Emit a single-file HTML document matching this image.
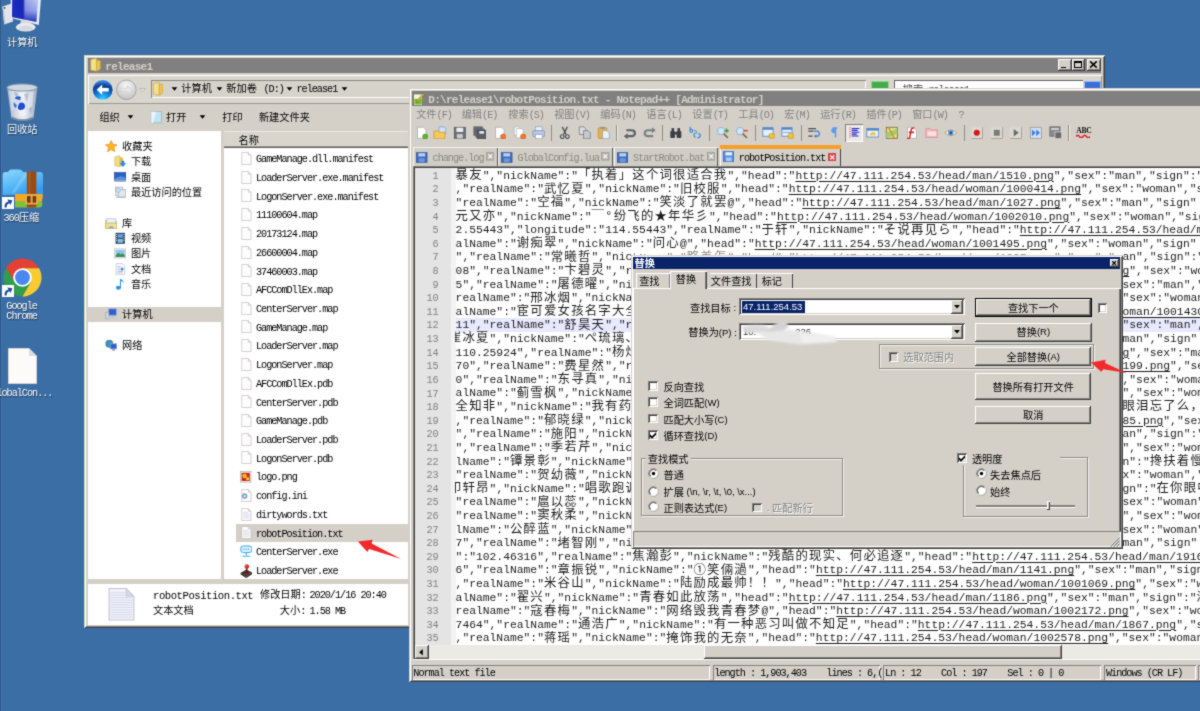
<!DOCTYPE html>
<html lang="zh-CN"><head><meta charset="utf-8"><title>Notepad++ replace</title><style>
html,body{margin:0;padding:0}
html{overflow:hidden;width:1200px;height:711px;background:#3a6ea5}
body{width:1200px;height:711px;overflow:hidden;background:#3a6ea5;position:relative;font-family:"Liberation Mono","Noto Sans CJK SC",monospace;font-size:10.2px;color:#000}
#v{position:absolute;left:0;top:0;width:1200px;height:711px;overflow:hidden}
#r{position:absolute;left:0;top:0;width:1260px;height:740px;background:#3a6ea5;filter:url(#soft)}
.a{position:absolute}
.t{white-space:pre}
.u{font-family:"Liberation Mono","Noto Sans CJK SC",monospace;font-size:10.2px}
.u .l,.dl .l,.tb .l,.u14 .l{letter-spacing:-1.02px}
.dl{font-family:"Liberation Mono","Noto Sans CJK SC",monospace;font-size:10.2px;color:#fff;text-shadow:.6px .6px .8px rgba(0,0,0,.55)}
.tb{font-family:"Liberation Mono","Noto Sans CJK SC",monospace;font-size:10.2px;font-weight:bold}
.tb .l{letter-spacing:-.72px;font-size:11px}
.u14{font-family:"Liberation Mono","Noto Sans CJK SC",monospace;font-size:10.6px}
.u14 .l{letter-spacing:-.46px}
.d{font-family:"Liberation Sans","Noto Sans CJK SC",sans-serif;font-size:10.2px}
.dn{position:relative;top:-.9px;font-size:9.5px}
.e{font-family:"Liberation Mono","Noto Sans CJK SC",monospace;font-size:11.33px;white-space:pre;color:#1c1c1c}
.e .c{font-size:12.4px;letter-spacing:1.2px;line-height:0;position:relative;top:.4px}
.e u{text-decoration:underline;text-decoration-thickness:.9px;text-underline-offset:1.5px}
.ln{font-family:"Liberation Mono",monospace;font-size:10.2px;color:#808080;text-align:right}
</style></head><body><svg width="0" height="0" style="position:absolute"><defs><filter id="soft" x="0" y="0" width="100%" height="100%" color-interpolation-filters="sRGB"><feConvolveMatrix order="3" kernelMatrix="0.03 0.09 0.03 0.09 0.52 0.09 0.03 0.09 0.03" edgeMode="duplicate" preserveAlpha="true"/></filter></defs></svg><div id="v"><div id="r">
<svg class="a" style="left:0;top:0" width="44" height="34" viewBox="0 0 44 34">
<defs><linearGradient id="scr" x1="0" y1="0" x2="1" y2="0"><stop offset="0" stop-color="#1a2ec0"/><stop offset=".42" stop-color="#1424b0"/><stop offset=".5" stop-color="#9aa8ea"/><stop offset="1" stop-color="#c9d2f4"/></linearGradient>
<linearGradient id="scr2" x1="0" y1="0" x2="0" y2="1"><stop offset="0" stop-color="#2030c0" stop-opacity="0"/><stop offset=".55" stop-color="#2030c0" stop-opacity=".25"/><stop offset="1" stop-color="#1a2ab8" stop-opacity=".95"/></linearGradient></defs>
<path d="M2.5 6.5 L11.5 3.6 L13 21.4 L4.2 24.6Z" fill="#e3e4ea"/>
<path d="M2.5 6.5 L4.2 24.6 L5.4 24.2 L3.8 6.1Z" fill="#c9cbd4"/>
<circle cx="4.6" cy="7.8" r=".9" fill="#3a4a3a"/>
<path d="M10.6 -3 L41 -2 L38.8 25 L11.2 18Z" fill="#eceef3"/>
<path d="M12.2 -3 L38.4 -2 L36.4 22 L12 16.9Z" fill="url(#scr)"/>
<path d="M12.2 -3 L38.4 -2 L36.4 22 L12 16.9Z" fill="url(#scr2)"/>
<path d="M21 20 L31 22.5 L31.4 26 L20 25Z" fill="#d4d6dc"/>
<ellipse cx="25.7" cy="27.2" rx="9.8" ry="4.4" fill="#e9eaee"/>
<ellipse cx="25.7" cy="28.2" rx="7" ry="2.4" fill="#d6d8de"/>
</svg>
<div class="a t dl" style="left:7.00px;top:37.00px;height:14px;line-height:14px;">计算机</div>
<svg class="a" style="left:5px;top:82px" width="36" height="41" viewBox="0 0 36 41">
<defs><linearGradient id="bin" x1="0" y1="0" x2="1" y2="0"><stop offset="0" stop-color="#a3b2c8"/><stop offset=".3" stop-color="#d3dbe7"/><stop offset=".55" stop-color="#e9edf4"/><stop offset=".8" stop-color="#c2cddd"/><stop offset="1" stop-color="#93a3ba"/></linearGradient></defs>
<path d="M2 5 L32.5 5 L28.5 36.5 Q17.5 41 6.5 36.5Z" fill="url(#bin)"/>
<path d="M4 9 L9 8 L11 20 L7 30Z M14 8 L20 10 L18 18 L13 15Z M22 12 L29 9 L27 24 L23 27Z M12 26 L20 24 L22 33 L14 35Z" fill="#fff" opacity=".35"/>
<path d="M9 10 L13 12 L12 18Z M19 12 L24 11 L22 20Z M24 26 L27 25 L26 33Z" fill="#7f8da3" opacity=".4"/>
<ellipse cx="17.2" cy="5.5" rx="15.2" ry="3.6" fill="#cfd7e2" stroke="#8693a5" stroke-width="1"/>
<path d="M6.5 34.5 Q17.5 40 28.5 34.5 L28.3 36.5 Q17.5 41.5 6.7 36.5Z" fill="#6f747d" opacity=".8"/>
<path d="M9.5 16.5 q2.5 -3.5 6.5 -1.5 l-1 3.2 q-3 -1 -5.5 -1.7z" fill="#2a5bd0"/>
<path d="M14.5 21 q4.5 -1.5 5.5 2.5 q.5 4 -4 4.5 q-3 0 -3.2 -2.6 q.2 -2 1.7 -4.4z" fill="#1f4fd0"/>
<path d="M9 20 q-1.5 3.5 1.5 6 l1.5 -2.5 q-1.5 -1.5 -3 -3.5z" fill="#3d6fe0"/>
</svg>
<div class="a t dl" style="left:7.00px;top:124.00px;height:14px;line-height:14px;">回收站</div>
<svg class="a" style="left:1.5px;top:169px" width="42" height="41" viewBox="0 0 42 41">
<defs><linearGradient id="fz" x1="0" y1="0" x2=".6" y2="1"><stop offset="0" stop-color="#8fd8ff"/><stop offset=".5" stop-color="#5ebcf8"/><stop offset="1" stop-color="#2f9cf0"/></linearGradient></defs>
<path d="M.6 6 Q.6 3 3.6 3 L6 3 Q7.5 .4 10 .6 L17 .6 Q19.5 .4 21 3 L38 3 Q41 3 41 6 L41 26 L.6 26Z" fill="url(#fz)"/>
<path d="M9 24 L22 5 L26 5 L13 24Z" fill="#fff" opacity=".18"/>
<path d="M13 25 L40 25 L41 26.5 L40 32 L13 32Z" fill="#f5a623"/>
<path d="M13 32 L40 32 L40.4 36 Q40 38.4 38 38.6 L13 38.6Z" fill="#7cc23f"/>
<rect x="24.8" y="2.4" width="9.6" height="36" rx="1.2" fill="#9a4a16"/>
<rect x="26.6" y="3" width="2" height="22" fill="#b5642a" opacity=".6"/>
<rect x="23" y="25" width="13.2" height="10.6" rx="2" fill="#e2ae44"/>
<rect x="25" y="27" width="9.2" height="6.8" rx="1" fill="#7a3812"/>
<rect x="28.6" y="26.4" width="2" height="8" fill="#e2ae44"/>
</svg>
<svg class="a" style="left:2.4px;top:197.2px" width="12.0" height="12.0" viewBox="0 0 12 12"><rect x="0" y="0" width="12" height="12" fill="#fff"/><path d="M2.6 10.6 Q2 5.4 6.4 4.6 L5.4 2.4 L10.4 3.2 L8.6 8 L7.6 6.2 Q4.6 6.6 4.6 10.6Z" fill="#1f4aa0"/></svg>
<div class="a t dl" style="left:3.50px;top:211.50px;height:14px;line-height:14px;"><span class="l">360</span>压缩</div>
<svg class="a" style="left:3px;top:257.5px" width="39" height="39" viewBox="0 0 40 40">
<path d="M20 10.4 L36.97 10.4 A19.5 19.5 0 0 0 3.2 10.1 L11.69 24.8 L20 20Z" fill="#e34133"/>
<path d="M28.31 24.8 L19.83 39.5 A19.5 19.5 0 0 0 36.97 10.4 L20 10.4 L20 20Z" fill="#f9cb31"/>
<path d="M11.69 24.8 L3.2 10.1 A19.5 19.5 0 0 0 19.83 39.5 L28.31 24.8 L20 20Z" fill="#2f9e4f"/>
<circle cx="20" cy="20" r="9.6" fill="#fff"/>
<circle cx="20" cy="20" r="7.6" fill="#4a87ee"/>
</svg>
<svg class="a" style="left:2.4px;top:284.6px" width="12.0" height="12.0" viewBox="0 0 12 12"><rect x="0" y="0" width="12" height="12" fill="#fff"/><path d="M2.6 10.6 Q2 5.4 6.4 4.6 L5.4 2.4 L10.4 3.2 L8.6 8 L7.6 6.2 Q4.6 6.6 4.6 10.6Z" fill="#1f4aa0"/></svg>
<div class="a t dl" style="left:6.30px;top:299.70px;height:14px;line-height:14px;"><span class="l">Google</span></div>
<div class="a t dl" style="left:6.30px;top:310.00px;height:14px;line-height:14px;"><span class="l">Chrome</span></div>
<svg class="a" style="left:8px;top:347.5px" width="29" height="36" viewBox="0 0 29 36"><path d="M.5 .5 L21 .5 L28.5 8 L28.5 35.5 L.5 35.5Z" fill="#fdfafa" stroke="#d9d4d4"/><path d="M21 .5 L21 8 L28.5 8Z" fill="#d9dce2"/></svg>
<div class="a t dl" style="left:-3.60px;top:387.00px;height:14px;line-height:14px;"><span class="l">lobalCon...</span></div>
<div class="a " style="left:84.30px;top:54.50px;width:1020.90px;height:573.90px;background:#d4d0c8;box-shadow:inset 1px 1px 0 #d4d0c8,inset -1px -1px 0 #404040,inset 2px 2px 0 #fff,inset -2px -2px 0 #808080"></div>
<div class="a " style="left:88.00px;top:57.60px;width:1013.40px;height:15.60px;background:#808080"></div>
<svg class="a" style="left:90.0px;top:58.4px" width="11.0" height="13.5" viewBox="0 0 11 14"><path d="M.5 1.5 L6.5 .3 L6.5 13.7 L.5 12.5Z" fill="#f7e08a" stroke="#c9a43a" stroke-width=".6"/><path d="M6.5 2 L10.5 2.8 L10.5 11.5 L6.5 13.7Z" fill="#e9c455" stroke="#c9a43a" stroke-width=".6"/></svg>
<div class="a t tb" style="left:105.30px;top:60.30px;height:14px;line-height:14px;color:#d4d0c8"><span class="l">release1</span></div>
<div class="a " style="left:1058.00px;top:59.40px;width:13.60px;height:11.60px;background:#d4d0c8;box-shadow:inset -1px -1px 0 #404040,inset 1px 1px 0 #fff,inset -2px -2px 0 #808080;"></div>
<div class="a " style="left:1060.80px;top:66.60px;width:5.20px;height:1.70px;background:#000"></div>
<div class="a " style="left:1071.60px;top:59.40px;width:13.60px;height:11.60px;background:#d4d0c8;box-shadow:inset -1px -1px 0 #404040,inset 1px 1px 0 #fff,inset -2px -2px 0 #808080;"></div>
<div class="a " style="left:1074.10px;top:61.40px;width:7.80px;height:6.60px;border:1px solid #000;border-top:2px solid #000;box-sizing:border-box"></div>
<div class="a " style="left:1087.20px;top:59.40px;width:13.60px;height:11.60px;background:#d4d0c8;box-shadow:inset -1px -1px 0 #404040,inset 1px 1px 0 #fff,inset -2px -2px 0 #808080;"></div>
<svg class="a" style="left:1087.2px;top:59.4px" width="13.6" height="11.6" viewBox="0 0 13 11"><path d="M3 2.2 L9.3 8.2 M9.3 2.2 L3 8.2" stroke="#000" stroke-width="1.5"/></svg>
<div class="a " style="left:87.60px;top:75.00px;width:1014.00px;height:29.00px;background:#d9d6ce;box-shadow:inset 1px 1px 0 #fff,inset -1px -1px 0 #9a978f"></div>
<svg class="a" style="left:90px;top:78px" width="60" height="24" viewBox="0 0 60 24">
<defs><radialGradient id="bk" cx=".5" cy=".95" r=".95"><stop offset="0" stop-color="#3fd0ff"/><stop offset=".35" stop-color="#1186e0"/><stop offset=".7" stop-color="#0b3f9a"/><stop offset="1" stop-color="#5fa8e8"/></radialGradient>
<radialGradient id="fw" cx=".5" cy=".3" r=".8"><stop offset="0" stop-color="#fafafa"/><stop offset="1" stop-color="#b9b9b9"/></radialGradient></defs>
<circle cx="12.7" cy="11.8" r="10.4" fill="url(#bk)" stroke="#e9eef5" stroke-width=".8"/>
<path d="M6.7 11.8 L12.2 6.6 L12.2 10 L18.7 10 L18.7 13.6 L12.2 13.6 L12.2 17Z" fill="#fff"/>
<circle cx="36.4" cy="11.8" r="9.8" fill="url(#fw)" stroke="#9a9a9a" stroke-width=".8"/>
<path d="M42 11.8 L37 7.2 L37 10.3 L31 10.3 L31 13.3 L37 13.3 L37 16.4Z" fill="#e8e8e8" stroke="#c4c4c4" stroke-width=".5"/>
<path d="M49.5 10.5 L55.5 10.5 L52.5 14Z" fill="#e6e6e6" stroke="#a0a0a0" stroke-width=".6"/>
</svg>
<div class="a " style="left:151.00px;top:80.00px;width:715.00px;height:17.80px;background:#d6d3cb;box-shadow:inset 1px 1px 0 #8a8780,inset -1px -1px 0 #fff"></div>
<svg class="a" style="left:152.8px;top:82.2px" width="10.5" height="13.5" viewBox="0 0 11 14"><path d="M.5 1.5 L6.5 .3 L6.5 13.7 L.5 12.5Z" fill="#f7e08a" stroke="#c9a43a" stroke-width=".6"/><path d="M6.5 2 L10.5 2.8 L10.5 11.5 L6.5 13.7Z" fill="#e9c455" stroke="#c9a43a" stroke-width=".6"/></svg>
<svg class="a" style="left:170.5px;top:87.1px" width="7" height="4.2" viewBox="0 0 6 4"><path d="M0.3 .3 L5.7 .3 L3 3.6Z" fill="#000"/></svg>
<div class="a t u" style="left:181.30px;top:83.10px;height:14px;line-height:14px;">计算机</div>
<svg class="a" style="left:215.5px;top:87.1px" width="7" height="4.2" viewBox="0 0 6 4"><path d="M0.3 .3 L5.7 .3 L3 3.6Z" fill="#000"/></svg>
<div class="a t u" style="left:226.30px;top:83.10px;height:14px;line-height:14px;">新加卷</div>
<div class="a t u" style="left:263.50px;top:83.10px;height:14px;line-height:14px;"><span class="l">(D:)</span></div>
<svg class="a" style="left:286.1px;top:87.1px" width="7" height="4.2" viewBox="0 0 6 4"><path d="M0.3 .3 L5.7 .3 L3 3.6Z" fill="#000"/></svg>
<div class="a t u" style="left:296.50px;top:83.10px;height:14px;line-height:14px;"><span class="l">release1</span></div>
<svg class="a" style="left:341.4px;top:87.1px" width="7" height="4.2" viewBox="0 0 6 4"><path d="M0.3 .3 L5.7 .3 L3 3.6Z" fill="#000"/></svg>
<div class="a " style="left:871.00px;top:81.00px;width:18.00px;height:17.00px;background:#3fae49;border-radius:2px;box-shadow:inset 0 0 0 1px #8fd695"></div>
<div class="a " style="left:894.00px;top:80.40px;width:188.50px;height:17.80px;background:#fff;box-shadow:inset 1px 1px 0 #606060"></div>
<div class="a t u" style="left:902.80px;top:84.30px;height:14px;line-height:14px;color:#4a4a4a">搜索<span class="l"> release1</span></div>
<div class="a " style="left:1084.00px;top:81.00px;width:16.50px;height:17.00px;background:#3b6fd8;border-radius:2px;box-shadow:inset 0 0 0 1px #9ab8ee"></div>
<div class="a " style="left:88.00px;top:105.00px;width:1013.40px;height:26.00px;background:#d4d0c8"></div>
<div class="a t u" style="left:99.40px;top:112.30px;height:14px;line-height:14px;">组织</div>
<svg class="a" style="left:127.3px;top:115.3px" width="7" height="4.2" viewBox="0 0 6 4"><path d="M0.3 .3 L5.7 .3 L3 3.6Z" fill="#000"/></svg>
<svg class="a" style="left:150px;top:111.4px" width="12.5" height="12.5" viewBox="0 0 12 12"><rect x="1.2" y=".6" width="9.8" height="10.8" fill="#bfe4f5" stroke="#9fb4c2" stroke-width=".8"/><path d="M1.2 .6 L6 .6 L3 11.4 L1.2 11.4Z" fill="#e9f6fc"/></svg>
<div class="a t u" style="left:166.00px;top:112.30px;height:14px;line-height:14px;">打开</div>
<svg class="a" style="left:198.9px;top:115.3px" width="7" height="4.2" viewBox="0 0 6 4"><path d="M0.3 .3 L5.7 .3 L3 3.6Z" fill="#000"/></svg>
<div class="a t u" style="left:222.30px;top:112.30px;height:14px;line-height:14px;">打印</div>
<div class="a t u" style="left:258.90px;top:112.30px;height:14px;line-height:14px;">新建文件夹</div>
<div class="a " style="left:87.70px;top:131.30px;width:133.70px;height:448.20px;background:#fff"></div>
<div class="a " style="left:87.70px;top:307.10px;width:133.70px;height:14.70px;background:#d4d0c8"></div>
<div class="a " style="left:224.30px;top:131.30px;width:184.00px;height:448.20px;background:#fff"></div>
<div class="a " style="left:224.30px;top:131.30px;width:184.00px;height:17.20px;background:#d8d5cd;box-shadow:inset 0 -1.4px 0 #5f5d58, inset 0 1px 0 #eceae4"></div>
<div class="a t u" style="left:238.60px;top:135.20px;height:14px;line-height:14px;">名称</div>
<div class="a " style="left:87.70px;top:584.20px;width:320.60px;height:40.80px;background:#fff"></div>
<svg class="a" style="left:105.0px;top:139.8px" width="12.4" height="12.4" viewBox="0 0 12 12"><path d="M6 .5 L7.6 4.2 L11.6 4.6 L8.6 7.3 L9.5 11.3 L6 9.2 L2.5 11.3 L3.4 7.3 L.4 4.6 L4.4 4.2Z" fill="#ffb624" stroke="#f08a1c" stroke-width=".7"/></svg>
<div class="a t u" style="left:122.10px;top:140.80px;height:14px;line-height:14px;">收藏夹</div>
<svg class="a" style="left:113.8px;top:155.2px" width="12.4" height="12.4" viewBox="0 0 12 12"><path d="M.8 2 L5.5 .6 L5.5 11.4 L.8 10.4Z" fill="#f6de85" stroke="#c9a43a" stroke-width=".5"/><path d="M5.5 2 L8.7 2.6 L8.7 9.8 L5.5 11.4Z" fill="#e5bf4d"/><path d="M7.2 5.6 L10 5.6 L10 8 L11.8 8 L8.6 11.6 L5.4 8 L7.2 8Z" fill="#2a8be6"/></svg>
<div class="a t u" style="left:130.90px;top:156.20px;height:14px;line-height:14px;">下载</div>
<svg class="a" style="left:113.8px;top:170.7px" width="12.4" height="12.4" viewBox="0 0 12 12"><rect x=".5" y="1.5" width="11" height="7.5" fill="#2a5fc4" stroke="#1b3f8c" stroke-width=".6"/><rect x=".5" y="9" width="11" height="1.6" fill="#9fb3cf"/><path d="M.8 7.5 Q6 3 11.2 6.5 L11.2 8.8 L.8 8.8Z" fill="#5a8fe6"/></svg>
<div class="a t u" style="left:130.90px;top:171.70px;height:14px;line-height:14px;">桌面</div>
<svg class="a" style="left:113.8px;top:186.1px" width="12.4" height="12.4" viewBox="0 0 12 12"><rect x="1.5" y="1" width="7" height="8" fill="#eef2f6" stroke="#9aa7b5" stroke-width=".6"/><rect x="4" y="3.4" width="7" height="7.4" fill="#dfe8f1" stroke="#9aa7b5" stroke-width=".6"/><circle cx="4" cy="4" r="2.2" fill="#cfe0f4" stroke="#7f97b5" stroke-width=".5"/><rect x="2" y="10.2" width="9" height="1.2" fill="#b3bcc7"/></svg>
<div class="a t u" style="left:130.90px;top:187.10px;height:14px;line-height:14px;">最近访问的位置</div>
<svg class="a" style="left:105.0px;top:216.5px" width="12.4" height="12.4" viewBox="0 0 12 12"><path d="M.6 3 L4 3 L5 4.2 L11.4 4.2 L11.4 11 L.6 11Z" fill="#f3d87a" stroke="#c9a43a" stroke-width=".5"/><path d="M1.6 1.6 L10.4 1.6 L10.4 6 L1.6 6Z" fill="#e8f1fb" stroke="#9db4d0" stroke-width=".5"/><path d="M.6 6 L11.4 6 L11.4 11 L.6 11Z" fill="#f7e08a" stroke="#c9a43a" stroke-width=".5"/><path d="M3 11 Q6 6.5 9 11Z" fill="#6fb5ee"/></svg>
<div class="a t u" style="left:122.10px;top:217.50px;height:14px;line-height:14px;">库</div>
<svg class="a" style="left:113.8px;top:231.8px" width="12.4" height="12.4" viewBox="0 0 12 12"><rect x="1.5" y=".8" width="9" height="10.6" fill="#2c3a4f"/><rect x="3.4" y="1.8" width="5.2" height="3.8" fill="#5ea3e6"/><rect x="3.4" y="6.6" width="5.2" height="3.8" fill="#7fc0f0"/><path d="M2 2h.9v1H2zM2 4h.9v1H2zM2 6h.9v1H2zM2 8h.9v1H2zM9.1 2h.9v1h-.9zM9.1 4h.9v1h-.9zM9.1 6h.9v1h-.9zM9.1 8h.9v1h-.9z" fill="#dfe6ee"/></svg>
<div class="a t u" style="left:130.90px;top:232.80px;height:14px;line-height:14px;">视频</div>
<svg class="a" style="left:113.8px;top:247.2px" width="12.4" height="12.4" viewBox="0 0 12 12"><rect x=".6" y="1.8" width="10.8" height="8.8" fill="#eef3f7" stroke="#a9b6c4" stroke-width=".6"/><rect x="1.6" y="2.8" width="8.8" height="6.8" fill="#8ec5ee"/><path d="M1.6 8 L4.5 5.5 L6.5 7.2 L8.2 6 L10.4 8 L10.4 9.6 L1.6 9.6Z" fill="#3f8f4d"/></svg>
<div class="a t u" style="left:130.90px;top:248.20px;height:14px;line-height:14px;">图片</div>
<svg class="a" style="left:113.8px;top:262.5px" width="12.4" height="12.4" viewBox="0 0 12 12"><path d="M2 .6 L8 .6 L10.4 3 L10.4 11.4 L2 11.4Z" fill="#fbfcfe" stroke="#a9b6c4" stroke-width=".6"/><path d="M3.4 3.4h3M3.4 5h2.4M3.4 6.6h2.4M3.4 8.2h5.2M3.4 9.6h5.2" stroke="#8da4c0" stroke-width=".6"/><rect x="6.6" y="4.6" width="2.4" height="2.6" fill="#3f7fd6"/></svg>
<div class="a t u" style="left:130.90px;top:263.50px;height:14px;line-height:14px;">文档</div>
<svg class="a" style="left:113.8px;top:277.8px" width="12.4" height="12.4" viewBox="0 0 12 12"><path d="M5.8 .8 Q9.6 2 9.6 5.4 Q9.4 3.4 6.8 3 L6.8 9 Q6.8 11.4 4.2 11.4 Q1.8 11.4 1.8 9.4 Q1.8 7.6 4.2 7.6 Q5.2 7.6 5.8 8Z" fill="#2d93ea"/></svg>
<div class="a t u" style="left:130.90px;top:278.80px;height:14px;line-height:14px;">音乐</div>
<svg class="a" style="left:105.0px;top:308.3px" width="12.4" height="12.4" viewBox="0 0 12 12"><rect x="3.4" y=".8" width="7.6" height="6.2" fill="#2f5fd0" stroke="#9fb0cc" stroke-width=".7"/><rect x="5.2" y="7.2" width="4" height="1.2" fill="#a9b3c2"/><rect x=".8" y="4" width="3" height="6.6" fill="#cfd6df" stroke="#8d98a8" stroke-width=".5"/><rect x="3" y="9.2" width="8.4" height="1.6" fill="#c6ccd6"/></svg>
<div class="a t u" style="left:122.10px;top:309.30px;height:14px;line-height:14px;">计算机</div>
<svg class="a" style="left:105.0px;top:339.1px" width="12.4" height="12.4" viewBox="0 0 12 12"><circle cx="4.2" cy="4.6" r="3.8" fill="#3fa55a"/><path d="M1 3 Q4 1 6.5 2.2 Q5 4.4 6.8 6 Q4 8.6 1.4 7Z" fill="#3d86e0"/><rect x="5" y="4.6" width="6.4" height="5" fill="#2f5fd0" stroke="#9fb0cc" stroke-width=".7"/><rect x="6.8" y="9.8" width="3" height="1.4" fill="#8d98a8"/></svg>
<div class="a t u" style="left:122.10px;top:340.10px;height:14px;line-height:14px;">网络</div>
<svg class="a" style="left:240.8px;top:151.9px" width="10.8" height="13.0" viewBox="0 0 11 14"><path d="M.5 .5 L7.6 .5 L10.5 3.4 L10.5 13.5 L.5 13.5Z" fill="#fffdfd" stroke="#b9b4b4" stroke-width=".7"/><path d="M7.6 .5 L7.6 3.4 L10.5 3.4" fill="#eee" stroke="#b9b4b4" stroke-width=".6"/></svg>
<div class="a t u" style="left:256.00px;top:153.30px;height:14px;line-height:14px;"><span class="l">GameManage.dll.manifest</span></div>
<svg class="a" style="left:240.8px;top:170.6px" width="10.8" height="13.0" viewBox="0 0 11 14"><path d="M.5 .5 L7.6 .5 L10.5 3.4 L10.5 13.5 L.5 13.5Z" fill="#fffdfd" stroke="#b9b4b4" stroke-width=".7"/><path d="M7.6 .5 L7.6 3.4 L10.5 3.4" fill="#eee" stroke="#b9b4b4" stroke-width=".6"/></svg>
<div class="a t u" style="left:256.00px;top:172.02px;height:14px;line-height:14px;"><span class="l">LoaderServer.exe.manifest</span></div>
<svg class="a" style="left:240.8px;top:189.3px" width="10.8" height="13.0" viewBox="0 0 11 14"><path d="M.5 .5 L7.6 .5 L10.5 3.4 L10.5 13.5 L.5 13.5Z" fill="#fffdfd" stroke="#b9b4b4" stroke-width=".7"/><path d="M7.6 .5 L7.6 3.4 L10.5 3.4" fill="#eee" stroke="#b9b4b4" stroke-width=".6"/></svg>
<div class="a t u" style="left:256.00px;top:190.73px;height:14px;line-height:14px;"><span class="l">LogonServer.exe.manifest</span></div>
<svg class="a" style="left:240.8px;top:208.0px" width="10.8" height="13.0" viewBox="0 0 11 14"><path d="M.5 .5 L7.6 .5 L10.5 3.4 L10.5 13.5 L.5 13.5Z" fill="#fffdfd" stroke="#b9b4b4" stroke-width=".7"/><path d="M7.6 .5 L7.6 3.4 L10.5 3.4" fill="#eee" stroke="#b9b4b4" stroke-width=".6"/></svg>
<div class="a t u" style="left:256.00px;top:209.45px;height:14px;line-height:14px;"><span class="l">11100604.map</span></div>
<svg class="a" style="left:240.8px;top:226.8px" width="10.8" height="13.0" viewBox="0 0 11 14"><path d="M.5 .5 L7.6 .5 L10.5 3.4 L10.5 13.5 L.5 13.5Z" fill="#fffdfd" stroke="#b9b4b4" stroke-width=".7"/><path d="M7.6 .5 L7.6 3.4 L10.5 3.4" fill="#eee" stroke="#b9b4b4" stroke-width=".6"/></svg>
<div class="a t u" style="left:256.00px;top:228.16px;height:14px;line-height:14px;"><span class="l">20173124.map</span></div>
<svg class="a" style="left:240.8px;top:245.5px" width="10.8" height="13.0" viewBox="0 0 11 14"><path d="M.5 .5 L7.6 .5 L10.5 3.4 L10.5 13.5 L.5 13.5Z" fill="#fffdfd" stroke="#b9b4b4" stroke-width=".7"/><path d="M7.6 .5 L7.6 3.4 L10.5 3.4" fill="#eee" stroke="#b9b4b4" stroke-width=".6"/></svg>
<div class="a t u" style="left:256.00px;top:246.88px;height:14px;line-height:14px;"><span class="l">26600004.map</span></div>
<svg class="a" style="left:240.8px;top:264.2px" width="10.8" height="13.0" viewBox="0 0 11 14"><path d="M.5 .5 L7.6 .5 L10.5 3.4 L10.5 13.5 L.5 13.5Z" fill="#fffdfd" stroke="#b9b4b4" stroke-width=".7"/><path d="M7.6 .5 L7.6 3.4 L10.5 3.4" fill="#eee" stroke="#b9b4b4" stroke-width=".6"/></svg>
<div class="a t u" style="left:256.00px;top:265.60px;height:14px;line-height:14px;"><span class="l">37460003.map</span></div>
<svg class="a" style="left:240.8px;top:282.9px" width="10.8" height="13.0" viewBox="0 0 11 14"><path d="M.5 .5 L7.6 .5 L10.5 3.4 L10.5 13.5 L.5 13.5Z" fill="#fffdfd" stroke="#b9b4b4" stroke-width=".7"/><path d="M7.6 .5 L7.6 3.4 L10.5 3.4" fill="#eee" stroke="#b9b4b4" stroke-width=".6"/></svg>
<div class="a t u" style="left:256.00px;top:284.31px;height:14px;line-height:14px;"><span class="l">AFCComDllEx.map</span></div>
<svg class="a" style="left:240.8px;top:301.6px" width="10.8" height="13.0" viewBox="0 0 11 14"><path d="M.5 .5 L7.6 .5 L10.5 3.4 L10.5 13.5 L.5 13.5Z" fill="#fffdfd" stroke="#b9b4b4" stroke-width=".7"/><path d="M7.6 .5 L7.6 3.4 L10.5 3.4" fill="#eee" stroke="#b9b4b4" stroke-width=".6"/></svg>
<div class="a t u" style="left:256.00px;top:303.03px;height:14px;line-height:14px;"><span class="l">CenterServer.map</span></div>
<svg class="a" style="left:240.8px;top:320.3px" width="10.8" height="13.0" viewBox="0 0 11 14"><path d="M.5 .5 L7.6 .5 L10.5 3.4 L10.5 13.5 L.5 13.5Z" fill="#fffdfd" stroke="#b9b4b4" stroke-width=".7"/><path d="M7.6 .5 L7.6 3.4 L10.5 3.4" fill="#eee" stroke="#b9b4b4" stroke-width=".6"/></svg>
<div class="a t u" style="left:256.00px;top:321.74px;height:14px;line-height:14px;"><span class="l">GameManage.map</span></div>
<svg class="a" style="left:240.8px;top:339.1px" width="10.8" height="13.0" viewBox="0 0 11 14"><path d="M.5 .5 L7.6 .5 L10.5 3.4 L10.5 13.5 L.5 13.5Z" fill="#fffdfd" stroke="#b9b4b4" stroke-width=".7"/><path d="M7.6 .5 L7.6 3.4 L10.5 3.4" fill="#eee" stroke="#b9b4b4" stroke-width=".6"/></svg>
<div class="a t u" style="left:256.00px;top:340.46px;height:14px;line-height:14px;"><span class="l">LoaderServer.map</span></div>
<svg class="a" style="left:240.8px;top:357.8px" width="10.8" height="13.0" viewBox="0 0 11 14"><path d="M.5 .5 L7.6 .5 L10.5 3.4 L10.5 13.5 L.5 13.5Z" fill="#fffdfd" stroke="#b9b4b4" stroke-width=".7"/><path d="M7.6 .5 L7.6 3.4 L10.5 3.4" fill="#eee" stroke="#b9b4b4" stroke-width=".6"/></svg>
<div class="a t u" style="left:256.00px;top:359.18px;height:14px;line-height:14px;"><span class="l">LogonServer.map</span></div>
<svg class="a" style="left:240.8px;top:376.5px" width="10.8" height="13.0" viewBox="0 0 11 14"><path d="M.5 .5 L7.6 .5 L10.5 3.4 L10.5 13.5 L.5 13.5Z" fill="#fffdfd" stroke="#b9b4b4" stroke-width=".7"/><path d="M7.6 .5 L7.6 3.4 L10.5 3.4" fill="#eee" stroke="#b9b4b4" stroke-width=".6"/></svg>
<div class="a t u" style="left:256.00px;top:377.89px;height:14px;line-height:14px;"><span class="l">AFCComDllEx.pdb</span></div>
<svg class="a" style="left:240.8px;top:395.2px" width="10.8" height="13.0" viewBox="0 0 11 14"><path d="M.5 .5 L7.6 .5 L10.5 3.4 L10.5 13.5 L.5 13.5Z" fill="#fffdfd" stroke="#b9b4b4" stroke-width=".7"/><path d="M7.6 .5 L7.6 3.4 L10.5 3.4" fill="#eee" stroke="#b9b4b4" stroke-width=".6"/></svg>
<div class="a t u" style="left:256.00px;top:396.61px;height:14px;line-height:14px;"><span class="l">CenterServer.pdb</span></div>
<svg class="a" style="left:240.8px;top:413.9px" width="10.8" height="13.0" viewBox="0 0 11 14"><path d="M.5 .5 L7.6 .5 L10.5 3.4 L10.5 13.5 L.5 13.5Z" fill="#fffdfd" stroke="#b9b4b4" stroke-width=".7"/><path d="M7.6 .5 L7.6 3.4 L10.5 3.4" fill="#eee" stroke="#b9b4b4" stroke-width=".6"/></svg>
<div class="a t u" style="left:256.00px;top:415.32px;height:14px;line-height:14px;"><span class="l">GameManage.pdb</span></div>
<svg class="a" style="left:240.8px;top:432.6px" width="10.8" height="13.0" viewBox="0 0 11 14"><path d="M.5 .5 L7.6 .5 L10.5 3.4 L10.5 13.5 L.5 13.5Z" fill="#fffdfd" stroke="#b9b4b4" stroke-width=".7"/><path d="M7.6 .5 L7.6 3.4 L10.5 3.4" fill="#eee" stroke="#b9b4b4" stroke-width=".6"/></svg>
<div class="a t u" style="left:256.00px;top:434.04px;height:14px;line-height:14px;"><span class="l">LoaderServer.pdb</span></div>
<svg class="a" style="left:240.8px;top:451.4px" width="10.8" height="13.0" viewBox="0 0 11 14"><path d="M.5 .5 L7.6 .5 L10.5 3.4 L10.5 13.5 L.5 13.5Z" fill="#fffdfd" stroke="#b9b4b4" stroke-width=".7"/><path d="M7.6 .5 L7.6 3.4 L10.5 3.4" fill="#eee" stroke="#b9b4b4" stroke-width=".6"/></svg>
<div class="a t u" style="left:256.00px;top:452.76px;height:14px;line-height:14px;"><span class="l">LogonServer.pdb</span></div>
<svg class="a" style="left:239.5px;top:470.3px" width="12.6" height="14.0" viewBox="0 0 12.6 14"><rect x=".4" y="1.6" width="10.6" height="10.6" fill="#f4f2ee" stroke="#b0aca4" stroke-width=".7"/><rect x="1.6" y="2.8" width="8.2" height="8.2" fill="#c7281c"/><circle cx="4.6" cy="6" r="2.3" fill="#f7b71e"/><rect x="6.2" y="7.4" width="2.8" height="2.8" fill="#f2d23a"/></svg>
<div class="a t u" style="left:256.00px;top:471.47px;height:14px;line-height:14px;"><span class="l">logo.png</span></div>
<svg class="a" style="left:240.8px;top:488.8px" width="10.8" height="13.0" viewBox="0 0 11 14"><path d="M.5 .5 L7.6 .5 L10.5 3.4 L10.5 13.5 L.5 13.5Z" fill="#fffdfd" stroke="#b9b4b4" stroke-width=".7"/><path d="M7.6 .5 L7.6 3.4 L10.5 3.4" fill="#eee" stroke="#b9b4b4" stroke-width=".6"/><circle cx="3.6" cy="7.6" r="2.6" fill="#8fb1dc" stroke="#5f86bd" stroke-width=".8"/><circle cx="3.6" cy="7.6" r=".9" fill="#fff"/></svg>
<div class="a t u" style="left:256.00px;top:490.19px;height:14px;line-height:14px;"><span class="l">config.ini</span></div>
<svg class="a" style="left:240.8px;top:507.5px" width="10.8" height="13.0" viewBox="0 0 11 14"><path d="M.5 .5 L7.6 .5 L10.5 3.4 L10.5 13.5 L.5 13.5Z" fill="#fffdfd" stroke="#b9b4b4" stroke-width=".7"/><path d="M7.6 .5 L7.6 3.4 L10.5 3.4" fill="#eee" stroke="#b9b4b4" stroke-width=".6"/><path d="M2 4.6h5M2 6.2h7M2 7.8h7M2 9.4h7M2 11h7" stroke="#c3cad6" stroke-width=".6"/></svg>
<div class="a t u" style="left:256.00px;top:508.90px;height:14px;line-height:14px;"><span class="l">dirtywords.txt</span></div>
<div class="a " style="left:235.90px;top:524.10px;width:172.00px;height:17.60px;background:#d4d0c8"></div>
<svg class="a" style="left:240.8px;top:526.2px" width="10.8" height="13.0" viewBox="0 0 11 14"><path d="M.5 .5 L7.6 .5 L10.5 3.4 L10.5 13.5 L.5 13.5Z" fill="#fffdfd" stroke="#b9b4b4" stroke-width=".7"/><path d="M7.6 .5 L7.6 3.4 L10.5 3.4" fill="#eee" stroke="#b9b4b4" stroke-width=".6"/><path d="M2 4.6h5M2 6.2h7M2 7.8h7M2 9.4h7M2 11h7" stroke="#c3cad6" stroke-width=".6"/></svg>
<div class="a t u" style="left:256.00px;top:527.62px;height:14px;line-height:14px;"><span class="l">robotPosition.txt</span></div>
<svg class="a" style="left:239.5px;top:545.1px" width="12.6" height="14.0" viewBox="0 0 12.6 14"><rect x=".6" y="1" width="11.4" height="6.6" rx="2.8" fill="#dff2fd" stroke="#37a7e8" stroke-width="1"/><path d="M2.6 4.3h7.4" stroke="#37a7e8" stroke-width="1.1" stroke-dasharray="1.2 .6"/><path d="M6.3 7.8v2.4M2.4 11.2h7.8" stroke="#37a7e8" stroke-width="1.1"/></svg>
<div class="a t u" style="left:256.00px;top:546.34px;height:14px;line-height:14px;"><span class="l">CenterServer.exe</span></div>
<svg class="a" style="left:239.5px;top:563.9px" width="12.6" height="14.0" viewBox="0 0 12.6 14"><path d="M.6 8.8 L6.6 5.6 L12.4 8.6 L6.2 12.8Z" fill="#3a3432"/><path d="M.6 8.8 L6.2 12.8 L6.2 14 L.6 10.2Z" fill="#141110"/><path d="M12.4 8.6 L6.2 12.8 L6.2 14 L12.4 10Z" fill="#221d1b"/><path d="M4.4 10.2 L6 11.2 L7.6 10.2 L6 9.4Z M8.2 9.4 L9.6 8.6 L10.6 9.2 L9.2 10Z" fill="#c4231c"/><path d="M6.5 8.4 L6.8 3.6" stroke="#5a1a16" stroke-width="1.5"/><circle cx="6.8" cy="2.5" r="2.3" fill="#d3261c"/><circle cx="6.2" cy="1.9" r=".8" fill="#f08a80"/></svg>
<div class="a t u" style="left:256.00px;top:565.05px;height:14px;line-height:14px;"><span class="l">LoaderServer.exe</span></div>
<svg class="a" style="left:108.4px;top:587.0px" width="27.0" height="34.0" viewBox="0 0 11 14"><path d="M.4 .6 L7.4 .6 L10.6 3.8 L10.6 13.6 L.4 13.6Z" fill="#f1f2fb" stroke="#c2c4d2" stroke-width=".45"/><path d="M7.4 .6 L7.4 3.8 L10.6 3.8Z" fill="#d5d7e2" stroke="#c2c4d2" stroke-width=".3"/><path d="M1 2.4h6M1 3.4h6M1 4.4h9M1 5.4h9M1 6.4h9M1 7.4h9M1 8.4h9M1 9.4h9M1 10.4h9M1 11.4h9M1 12.4h9" stroke="#d3d6ea" stroke-width=".4"/></svg>
<div class="a t u14" style="left:153.00px;top:588.90px;height:14px;line-height:14px;"><span class="l">robotPosition.txt</span></div>
<div class="a t u" style="left:260.00px;top:588.90px;height:14px;line-height:14px;">修改日期<span class="l">:</span></div>
<div class="a t u" style="left:309.50px;top:588.90px;height:14px;line-height:14px;"><span class="l">2020/1/16 20:40</span></div>
<div class="a t u" style="left:153.00px;top:604.50px;height:14px;line-height:14px;">文本文档</div>
<div class="a t u" style="left:279.80px;top:604.50px;height:14px;line-height:14px;">大小<span class="l">:</span></div>
<div class="a t u" style="left:309.50px;top:604.50px;height:14px;line-height:14px;"><span class="l">1.58 MB</span></div>
<div class="a " style="left:409.20px;top:87.50px;width:805.80px;height:594.40px;background:#d4d0c8;box-shadow:inset 1px 1px 0 #d4d0c8,inset -1px -1px 0 #404040,inset 2px 2px 0 #fff,inset -2px -2px 0 #808080"></div>
<div class="a " style="left:412.00px;top:90.80px;width:800.00px;height:15.00px;background:#808080"></div>
<svg class="a" style="left:413.4px;top:91.6px" width="11.6" height="13.6" viewBox="0 0 12 14"><rect x=".5" y="2" width="9.5" height="11.5" fill="#f4f7e8" stroke="#6b7a3a" stroke-width=".8"/><rect x="1.4" y="7" width="7.8" height="5.6" fill="#6fbf2e"/><path d="M4 9 L10.5 1.2 L11.8 2.4 L5.4 10.2 L3.6 10.8Z" fill="#e8c53a" stroke="#5a4a1a" stroke-width=".5"/></svg>
<div class="a t tb" style="left:428.30px;top:93.20px;height:14px;line-height:14px;color:#d4d0c8"><span class="l">D:\release1\robotPosition.txt - Notepad++ [Administrator]</span></div>
<div class="a t u" style="left:416.20px;top:109.20px;height:14px;line-height:14px;color:#808080">文件<span class="l">(F)</span></div>
<div class="a t u" style="left:461.70px;top:109.20px;height:14px;line-height:14px;color:#808080">编辑<span class="l">(E)</span></div>
<div class="a t u" style="left:508.30px;top:109.20px;height:14px;line-height:14px;color:#808080">搜索<span class="l">(S)</span></div>
<div class="a t u" style="left:554.20px;top:109.20px;height:14px;line-height:14px;color:#808080">视图<span class="l">(V)</span></div>
<div class="a t u" style="left:600.30px;top:109.20px;height:14px;line-height:14px;color:#808080">编码<span class="l">(N)</span></div>
<div class="a t u" style="left:646.30px;top:109.20px;height:14px;line-height:14px;color:#808080">语言<span class="l">(L)</span></div>
<div class="a t u" style="left:692.30px;top:109.20px;height:14px;line-height:14px;color:#808080">设置<span class="l">(T)</span></div>
<div class="a t u" style="left:738.30px;top:109.20px;height:14px;line-height:14px;color:#808080">工具<span class="l">(O)</span></div>
<div class="a t u" style="left:784.30px;top:109.20px;height:14px;line-height:14px;color:#808080">宏<span class="l">(M)</span></div>
<div class="a t u" style="left:820.20px;top:109.20px;height:14px;line-height:14px;color:#808080">运行<span class="l">(R)</span></div>
<div class="a t u" style="left:866.30px;top:109.20px;height:14px;line-height:14px;color:#808080">插件<span class="l">(P)</span></div>
<div class="a t u" style="left:912.20px;top:109.20px;height:14px;line-height:14px;color:#808080">窗口<span class="l">(W)</span></div>
<div class="a t u" style="left:958.50px;top:109.20px;height:14px;line-height:14px;color:#808080"><span class="l">?</span></div>
<div class="a " style="left:550.70px;top:124.50px;width:1.60px;height:16.00px;background:linear-gradient(90deg,#8e8c86 55%,#efeeea 55%)"></div>
<div class="a " style="left:616.40px;top:124.50px;width:1.60px;height:16.00px;background:linear-gradient(90deg,#8e8c86 55%,#efeeea 55%)"></div>
<div class="a " style="left:661.90px;top:124.50px;width:1.60px;height:16.00px;background:linear-gradient(90deg,#8e8c86 55%,#efeeea 55%)"></div>
<div class="a " style="left:708.90px;top:124.50px;width:1.60px;height:16.00px;background:linear-gradient(90deg,#8e8c86 55%,#efeeea 55%)"></div>
<div class="a " style="left:754.90px;top:124.50px;width:1.60px;height:16.00px;background:linear-gradient(90deg,#8e8c86 55%,#efeeea 55%)"></div>
<div class="a " style="left:800.70px;top:124.50px;width:1.60px;height:16.00px;background:linear-gradient(90deg,#8e8c86 55%,#efeeea 55%)"></div>
<div class="a " style="left:963.90px;top:124.50px;width:1.60px;height:16.00px;background:linear-gradient(90deg,#8e8c86 55%,#efeeea 55%)"></div>
<div class="a " style="left:1068.40px;top:124.50px;width:1.60px;height:16.00px;background:linear-gradient(90deg,#8e8c86 55%,#efeeea 55%)"></div>
<svg class="a" style="left:414.5px;top:125.6px" width="13.6" height="13.6" viewBox="0 0 16 16"><path d="M3 1.5 L10 1.5 L13 4.5 L13 14.5 L3 14.5Z" fill="#fff" stroke="#9aa3b0" stroke-width=".8"/><circle cx="12" cy="12.5" r="3" fill="#5cb82e" stroke="#3a7a1a" stroke-width=".6"/></svg>
<svg class="a" style="left:433.2px;top:125.6px" width="13.6" height="13.6" viewBox="0 0 16 16"><path d="M7 1 L13.5 1 L15 3 L15 9 L7 9Z" fill="#cfe2f7" stroke="#6f97c9" stroke-width=".8"/><path d="M1 6 L6 6 L7.5 7.5 L14 7.5 L14 15 L1 15Z" fill="#f7c95a" stroke="#c9922a" stroke-width=".8"/></svg>
<svg class="a" style="left:452.7px;top:125.6px" width="13.6" height="13.6" viewBox="0 0 16 16"><rect x="1.5" y="1.5" width="13" height="13" fill="#6b7078" stroke="#4a4e55" stroke-width=".8"/><rect x="4" y="2" width="8" height="5" fill="#e9ecf0"/><rect x="4.5" y="9.5" width="7" height="5" fill="#c8ccd2"/></svg>
<svg class="a" style="left:472.7px;top:125.6px" width="13.6" height="13.6" viewBox="0 0 16 16"><rect x="1" y="1" width="10" height="10" fill="#6b7078" stroke="#4a4e55" stroke-width=".7"/><rect x="3.5" y="3.5" width="10" height="10" fill="#6b7078" stroke="#4a4e55" stroke-width=".7"/><rect x="5.5" y="5.5" width="9.5" height="9.5" fill="#5a5f68" stroke="#3a3e45" stroke-width=".7"/><rect x="7.5" y="6" width="5.5" height="3" fill="#e9ecf0"/></svg>
<svg class="a" style="left:492.7px;top:125.6px" width="13.6" height="13.6" viewBox="0 0 16 16"><path d="M3 1.5 L10 1.5 L13 4.5 L13 14.5 L3 14.5Z" fill="#fff" stroke="#9aa3b0" stroke-width=".8"/><circle cx="12" cy="12.5" r="3.1" fill="#f0782a" stroke="#b9500f" stroke-width=".6"/></svg>
<svg class="a" style="left:512.5px;top:125.6px" width="13.6" height="13.6" viewBox="0 0 16 16"><path d="M1.5 1 L7 1 L9 3 L9 11 L1.5 11Z" fill="#fff" stroke="#9aa3b0" stroke-width=".7"/><path d="M4 3 L10 3 L12 5 L12 14 L4 14Z" fill="#fff" stroke="#9aa3b0" stroke-width=".7"/><circle cx="12" cy="12.5" r="3.1" fill="#f0782a" stroke="#b9500f" stroke-width=".6"/></svg>
<svg class="a" style="left:531.5px;top:125.6px" width="13.6" height="13.6" viewBox="0 0 16 16"><rect x="4" y="1" width="8" height="5" fill="#e8f0fb" stroke="#7f98c0" stroke-width=".7"/><rect x="1" y="5.5" width="14" height="7" rx="1.5" fill="#b9c9e4" stroke="#6f86b0" stroke-width=".8"/><rect x="4" y="10" width="8" height="5" fill="#fff" stroke="#7f98c0" stroke-width=".7"/></svg>
<svg class="a" style="left:557.7px;top:125.6px" width="13.6" height="13.6" viewBox="0 0 16 16"><path d="M5 1 L9.5 10 M11 1 L6.5 10" stroke="#4a4e55" stroke-width="1.6"/><circle cx="5" cy="12.5" r="2.2" fill="none" stroke="#4a4e55" stroke-width="1.4"/><circle cx="11" cy="12.5" r="2.2" fill="none" stroke="#4a4e55" stroke-width="1.4"/></svg>
<svg class="a" style="left:577.5px;top:125.6px" width="13.6" height="13.6" viewBox="0 0 16 16"><path d="M1.5 1 L7 1 L9 3 L9 10 L1.5 10Z" fill="#d8dbe0" stroke="#6b7078" stroke-width=".8"/><path d="M6.5 5.5 L12 5.5 L14.5 8 L14.5 15 L6.5 15Z" fill="#c4c8cf" stroke="#6b7078" stroke-width=".8"/></svg>
<svg class="a" style="left:597.0px;top:125.6px" width="13.6" height="13.6" viewBox="0 0 16 16"><rect x="1.5" y="2" width="10" height="12.5" rx="1" fill="#e8b34a" stroke="#b9842a" stroke-width=".8"/><rect x="4" y="1" width="5" height="2.4" fill="#8f949c"/><path d="M6.5 5.5 L12 5.5 L14.5 8 L14.5 15 L6.5 15Z" fill="#e9f1fb" stroke="#7f98c0" stroke-width=".8"/></svg>
<svg class="a" style="left:623.2px;top:125.6px" width="13.6" height="13.6" viewBox="0 0 16 16"><path d="M4 5 L10 5 Q14 5 14 8.5 Q14 12 10 12 L5 12" fill="none" stroke="#5a5f68" stroke-width="2.6"/><path d="M5.5 8.5 L1 12 L5.5 15.5Z" fill="#5a5f68"/></svg>
<svg class="a" style="left:642.7px;top:125.6px" width="13.6" height="13.6" viewBox="0 0 16 16"><path d="M12 12 L6 12 Q2 12 2 8.5 Q2 5 6 5 L11 5" fill="none" stroke="#7a7f88" stroke-width="2.6"/><path d="M10.5 1.5 L15 5 L10.5 8.5Z" fill="#7a7f88"/></svg>
<svg class="a" style="left:668.7px;top:125.6px" width="13.6" height="13.6" viewBox="0 0 16 16"><rect x="1.5" y="6" width="5.5" height="8" rx="1" fill="#3a3e45"/><rect x="9" y="6" width="5.5" height="8" rx="1" fill="#3a3e45"/><rect x="3" y="2.5" width="3" height="4" fill="#3a3e45"/><rect x="10" y="2.5" width="3" height="4" fill="#3a3e45"/><rect x="6.5" y="7" width="3" height="3" fill="#3a3e45"/></svg>
<svg class="a" style="left:688.2px;top:125.6px" width="13.6" height="13.6" viewBox="0 0 16 16"><path d="M2.5 1 L2.5 7 M2.5 4.5 Q5.5 3 5.5 6 Q5 8 2.5 7" fill="none" stroke="#2f8be0" stroke-width="1.4"/><path d="M9 8 Q7 9 7 11 Q7 13 9 13.5 M12 9.5 Q14.5 8.5 14.5 11 Q14.5 14 11 14" fill="none" stroke="#2f8be0" stroke-width="1.4"/><path d="M7 5 Q11 5 10.5 9" fill="none" stroke="#2f8be0" stroke-width="1"/></svg>
<svg class="a" style="left:715.7px;top:125.6px" width="13.6" height="13.6" viewBox="0 0 16 16"><circle cx="6" cy="6" r="4.3" fill="#cfe6fa" stroke="#8fb5dc" stroke-width="1.2"/><path d="M9 9 L14 14" stroke="#8a6a3a" stroke-width="2"/><path d="M10 5.5 h5 M12.5 3 v5" stroke="#3aa02e" stroke-width="1.8"/></svg>
<svg class="a" style="left:735.2px;top:125.6px" width="13.6" height="13.6" viewBox="0 0 16 16"><circle cx="6" cy="6" r="4.3" fill="#cfe6fa" stroke="#8fb5dc" stroke-width="1.2"/><path d="M9 9 L14 14" stroke="#8a6a3a" stroke-width="2"/><path d="M10 5.5 h5" stroke="#e0402e" stroke-width="1.8"/></svg>
<svg class="a" style="left:761.5px;top:125.6px" width="13.6" height="13.6" viewBox="0 0 16 16"><rect x="1" y="2" width="12" height="10" fill="#e9f1fb" stroke="#4f86c9" stroke-width="1"/><rect x="1" y="2" width="12" height="2.4" fill="#4f86c9"/><rect x="8.5" y="9" width="6" height="5.5" rx="1" fill="#f2c53a" stroke="#b98f1a" stroke-width=".7"/></svg>
<svg class="a" style="left:780.7px;top:125.6px" width="13.6" height="13.6" viewBox="0 0 16 16"><rect x="1" y="2" width="12" height="10" fill="#e9f1fb" stroke="#4f86c9" stroke-width="1"/><rect x="1" y="2" width="12" height="2.4" fill="#4f86c9"/><rect x="8.5" y="9" width="6" height="5.5" rx="1" fill="#f2c53a" stroke="#b98f1a" stroke-width=".7"/><path d="M2 7.5h10" stroke="#4f86c9" stroke-width=".8"/></svg>
<svg class="a" style="left:807.0px;top:125.6px" width="13.6" height="13.6" viewBox="0 0 16 16"><path d="M1.5 3h9M1.5 6h6M1.5 12h5" stroke="#4a4e55" stroke-width="1.4"/><path d="M8 6 h4 Q14.5 6 14.5 9 Q14.5 12 12 12 h-2" fill="none" stroke="#3f7fd6" stroke-width="1.4"/><path d="M11 9.8 L8 12 L11 14.2Z" fill="#3f7fd6"/></svg>
<svg class="a" style="left:827.0px;top:125.6px" width="13.6" height="13.6" viewBox="0 0 16 16"><path d="M10 2.5 v11 M6.5 2.5 h5.5" stroke="#5f9ae6" stroke-width="1.8"/><path d="M10 2.5 Q5 2 5 5.5 Q5 8.5 10 8.5Z" fill="#5f9ae6"/></svg>
<div class="a " style="left:844.60px;top:123.80px;width:18.20px;height:17.80px;background:#eceae6;box-shadow:inset 1px 1px 0 #808080,inset -1px -1px 0 #fff"></div>
<svg class="a" style="left:847.0px;top:125.6px" width="13.6" height="13.6" viewBox="0 0 16 16"><path d="M3.5 1.5 v13" stroke="#e02020" stroke-width="1" stroke-dasharray="1.2 1"/><path d="M5.5 3h9M5.5 5.2h7M5.5 7.4h9M5.5 9.6h6M5.5 11.8h8" stroke="#2020d8" stroke-width="1.3"/></svg>
<svg class="a" style="left:865.7px;top:125.6px" width="13.6" height="13.6" viewBox="0 0 16 16"><rect x="1" y="3" width="14" height="10" fill="#e9f1fb" stroke="#4f86c9" stroke-width="1"/><rect x="1" y="3" width="14" height="2.4" fill="#4f86c9"/><path d="M4 11 Q5 7 9 7.5 Q12 8 11 11Z" fill="#f2c53a"/></svg>
<svg class="a" style="left:885.2px;top:125.6px" width="13.6" height="13.6" viewBox="0 0 16 16"><rect x="1.5" y="1.5" width="13" height="13" fill="#e9d98a" stroke="#6b6f4a" stroke-width="1"/><path d="M1.5 8 L14.5 3 L14.5 9 L1.5 14.5Z" fill="#9fd06a"/><path d="M4 1.5 L11 14.5" stroke="#d98a2a" stroke-width="1.6"/></svg>
<svg class="a" style="left:905.2px;top:125.6px" width="13.6" height="13.6" viewBox="0 0 16 16"><path d="M3 1.5 L10 1.5 L13.5 5 L13.5 14.5 L3 14.5Z" fill="#fff" stroke="#9aa3b0" stroke-width=".8"/><path d="M11 2.5 Q7.5 1.5 7 6 L5.5 13.5 Q5 15.5 2.5 14.5 M4.5 7.5 h6" fill="none" stroke="#d02a20" stroke-width="1.8"/></svg>
<svg class="a" style="left:924.5px;top:125.6px" width="13.6" height="13.6" viewBox="0 0 16 16"><path d="M1 3 L6 3 L7.5 4.5 L15 4.5 L15 13.5 L1 13.5Z" fill="#f3b9bd" stroke="#d9868c" stroke-width=".8"/><rect x="3" y="6.5" width="10" height="5" fill="#fbe3e4"/></svg>
<svg class="a" style="left:944.0px;top:125.6px" width="13.6" height="13.6" viewBox="0 0 16 16"><path d="M1 8 Q8 1.5 15 8 Q8 14.5 1 8Z" fill="#f4f6f9" stroke="#c98f5a" stroke-width="1"/><circle cx="8" cy="8" r="3.2" fill="#4a9ae0"/><circle cx="8" cy="8" r="1.3" fill="#1a3a6a"/></svg>
<svg class="a" style="left:970.2px;top:125.6px" width="13.6" height="13.6" viewBox="0 0 16 16"><rect x="1.5" y="1.5" width="13" height="13" fill="#dcd9d2" stroke="#8f8c85" stroke-width=".8"/><path d="M1.5 14.5 L1.5 1.5 L14.5 1.5" fill="none" stroke="#fff" stroke-width=".8"/><circle cx="8" cy="8" r="3.6" fill="#d9141a"/></svg>
<svg class="a" style="left:989.5px;top:125.6px" width="13.6" height="13.6" viewBox="0 0 16 16"><rect x="1.5" y="1.5" width="13" height="13" fill="#dcd9d2" stroke="#8f8c85" stroke-width=".8"/><path d="M1.5 14.5 L1.5 1.5 L14.5 1.5" fill="none" stroke="#fff" stroke-width=".8"/><rect x="4.5" y="4.5" width="7" height="7" fill="#7a7a7a"/></svg>
<svg class="a" style="left:1009.4px;top:125.6px" width="13.6" height="13.6" viewBox="0 0 16 16"><rect x="1.5" y="1.5" width="13" height="13" fill="#dcd9d2" stroke="#8f8c85" stroke-width=".8"/><path d="M1.5 14.5 L1.5 1.5 L14.5 1.5" fill="none" stroke="#fff" stroke-width=".8"/><path d="M5.5 3.5 L11.5 8 L5.5 12.5Z" fill="#6a6a6a"/></svg>
<svg class="a" style="left:1029.2px;top:125.6px" width="13.6" height="13.6" viewBox="0 0 16 16"><rect x="1.5" y="1.5" width="13" height="13" fill="#cfe0f7" stroke="#8f8c85" stroke-width=".8"/><path d="M3.5 4 L8 8 L3.5 12Z M8.5 4 L13 8 L8.5 12Z" fill="#3f7fe0"/></svg>
<svg class="a" style="left:1049.2px;top:125.6px" width="13.6" height="13.6" viewBox="0 0 16 16"><rect x="1" y="1" width="12" height="11" fill="#8a8a8a" stroke="#5a5a5a" stroke-width=".8"/><rect x="2.5" y="2.5" width="9" height="2" fill="#d9d9d9"/><rect x="7" y="7" width="8" height="8" fill="#6a6a6a" stroke="#e6e6e6" stroke-width=".8"/></svg>
<div class="a t" style="left:1076.3px;top:125.6px;height:9px;line-height:9px;font-family:'Liberation Serif',serif;font-weight:bold;font-size:7.6px;color:#111;letter-spacing:-.35px">ABC</div>
<svg class="a" style="left:1076.4px;top:134px" width="14" height="4" viewBox="0 0 14 4"><path d="M0 2.5 Q1.75 0 3.5 2.5 T7 2.5 T10.5 2.5 T14 2.5" fill="none" stroke="#e02020" stroke-width="1.6"/></svg>
<div class="a " style="left:413.30px;top:147.00px;width:84.30px;height:18.60px;background:#d0cdc5;box-shadow:inset 1px 1px 0 #f4f3f0,inset -1px 0 0 #5a5854"></div>
<svg class="a" style="left:416.2px;top:151.6px" width="11.5" height="11.0" viewBox="0 0 12 11"><rect x=".5" y=".5" width="11" height="10" fill="#3f6fc0" stroke="#2a4f98" stroke-width=".8"/><rect x="2.5" y="1" width="7" height="3.4" fill="#bcd0ee"/><rect x="3" y="6.4" width="6" height="4" fill="#6f97d8"/></svg>
<div class="a t u" style="left:432.60px;top:151.80px;height:14px;line-height:14px;color:#8a8884"><span class="l">change.log</span></div>
<svg class="a" style="left:485.8px;top:152.4px" width="8.6" height="8.8" viewBox="0 0 9 9"><rect x=".6" y=".6" width="7.8" height="7.8" fill="#b4b1ab" stroke="#9a9a9a" stroke-width=".8"/><path d="M2.4 2.4 L6.6 6.6 M6.6 2.4 L2.4 6.6" stroke="#fff" stroke-width="1.3"/></svg>
<div class="a " style="left:498.20px;top:147.00px;width:114.80px;height:18.60px;background:#d0cdc5;box-shadow:inset 1px 1px 0 #f4f3f0,inset -1px 0 0 #5a5854"></div>
<svg class="a" style="left:501.1px;top:151.6px" width="11.5" height="11.0" viewBox="0 0 12 11"><rect x=".5" y=".5" width="11" height="10" fill="#3f6fc0" stroke="#2a4f98" stroke-width=".8"/><rect x="2.5" y="1" width="7" height="3.4" fill="#bcd0ee"/><rect x="3" y="6.4" width="6" height="4" fill="#6f97d8"/></svg>
<div class="a t u" style="left:517.50px;top:151.80px;height:14px;line-height:14px;color:#8a8884"><span class="l">GlobalConfig.lua</span></div>
<svg class="a" style="left:601.2px;top:152.4px" width="8.6" height="8.8" viewBox="0 0 9 9"><rect x=".6" y=".6" width="7.8" height="7.8" fill="#b4b1ab" stroke="#9a9a9a" stroke-width=".8"/><path d="M2.4 2.4 L6.6 6.6 M6.6 2.4 L2.4 6.6" stroke="#fff" stroke-width="1.3"/></svg>
<div class="a " style="left:613.80px;top:147.00px;width:104.60px;height:18.60px;background:#d0cdc5;box-shadow:inset 1px 1px 0 #f4f3f0,inset -1px 0 0 #5a5854"></div>
<svg class="a" style="left:616.7px;top:151.6px" width="11.5" height="11.0" viewBox="0 0 12 11"><rect x=".5" y=".5" width="11" height="10" fill="#3f6fc0" stroke="#2a4f98" stroke-width=".8"/><rect x="2.5" y="1" width="7" height="3.4" fill="#bcd0ee"/><rect x="3" y="6.4" width="6" height="4" fill="#6f97d8"/></svg>
<div class="a t u" style="left:633.10px;top:151.80px;height:14px;line-height:14px;color:#8a8884"><span class="l">StartRobot.bat</span></div>
<svg class="a" style="left:706.6px;top:152.4px" width="8.6" height="8.8" viewBox="0 0 9 9"><rect x=".6" y=".6" width="7.8" height="7.8" fill="#b4b1ab" stroke="#9a9a9a" stroke-width=".8"/><path d="M2.4 2.4 L6.6 6.6 M6.6 2.4 L2.4 6.6" stroke="#fff" stroke-width="1.3"/></svg>
<div class="a " style="left:719.50px;top:145.00px;width:121.80px;height:21.00px;background:#d4d0c8;box-shadow:inset 1px 0 0 #fff,inset -1px 0 0 #404040"></div>
<div class="a " style="left:719.50px;top:145.00px;width:121.80px;height:3.60px;background:#f5a02a"></div>
<svg class="a" style="left:722.5px;top:151.4px" width="11.5" height="11.0" viewBox="0 0 12 11"><rect x=".5" y=".5" width="11" height="10" fill="#4f8fe0" stroke="#2a5fb8" stroke-width=".8"/><rect x="2.5" y="1" width="7" height="3.4" fill="#e6f0fc"/><rect x="3" y="6.4" width="6" height="4" fill="#a9c9f2"/></svg>
<div class="a t u" style="left:738.80px;top:151.80px;height:14px;line-height:14px;"><span class="l">robotPosition.txt</span></div>
<svg class="a" style="left:827.6px;top:152.5px" width="8.6" height="8.8" viewBox="0 0 9 9"><rect x=".6" y=".6" width="7.8" height="7.8" fill="#e84a5a" stroke="#d0202a" stroke-width=".8"/><path d="M2.4 2.4 L6.6 6.6 M6.6 2.4 L2.4 6.6" stroke="#fff" stroke-width="1.3"/></svg>
<div class="a " style="left:412.50px;top:165.80px;width:800.00px;height:496.00px;background:#fff;box-shadow:inset 1px 1px 0 #808080,inset 2px 2px 0 #404040"></div>
<div class="a " style="left:414.50px;top:167.80px;width:36.10px;height:477.60px;background:#e4e4e4"></div>
<div class="a " style="left:450.60px;top:167.80px;width:5.00px;height:477.60px;background:#f3f3f3"></div>
<div class="a " style="left:455.60px;top:318.17px;width:760.00px;height:13.61px;background:#e8e8ff"></div>
<div class="a" style="left:455.4px;top:167.8px;width:800px;height:477.6px;overflow:hidden">
<div class="a e" style="left:0.20px;top:2.00px;height:13.61px;line-height:13.61px;width:760.00px;"><span class="c">暴友</span>","nickName":"<span class="c">「执着」这个词很适合我</span>","head":"<u>http://47.111.254.53/head/man/1510.png</u>","sex":"man","sign":"</div>
<div class="a e" style="left:0.20px;top:15.61px;height:13.61px;line-height:13.61px;width:760.00px;">,"realName":"<span class="c">武忆夏</span>","nickName":"<span class="c">旧校服</span>","head":"<u>http://47.111.254.53/head/woman/1000414.png</u>","sex":"woman","si</div>
<div class="a e" style="left:0.20px;top:29.21px;height:13.61px;line-height:13.61px;width:760.00px;">"realName":"<span class="c">空福</span>","nickName":"<span class="c">笑淡了就罢</span>@","head":"<u>http://47.111.254.53/head/man/1027.png</u>","sex":"man","sign"</div>
<div class="a e" style="left:0.20px;top:42.82px;height:13.61px;line-height:13.61px;width:760.00px;"><span class="c">元又亦</span>","nickName":"<span class="c">￣°纷飞的★年华彡</span>","head":"<u>http://47.111.254.53/head/woman/1002010.png</u>","sex":"woman","sig</div>
<div class="a e" style="left:0.20px;top:56.42px;height:13.61px;line-height:13.61px;width:760.00px;">2.55443","longitude":"114.55443","realName":"<span class="c">于轩</span>","nickName":"<span class="c">そ说再见ら</span>","head":"<u>http://47.111.254.53/head/man/1</u></div>
<div class="a e" style="left:0.20px;top:70.03px;height:13.61px;line-height:13.61px;width:760.00px;">alName":"<span class="c">谢痴翠</span>","nickName":"<span class="c">问心</span>@","head":"<u>http://47.111.254.53/head/woman/1001495.png</u>","sex":"woman","sign"</div>
<div class="a e" style="left:0.20px;top:382.97px;height:13.61px;line-height:13.61px;width:760.00px;">":"102.46316","realName":"<span class="c">焦瀚彭</span>","nickName":"<span class="c">残酷的现实、何必追逐</span>","head":"<u>http://47.111.254.53/head/man/1916</u></div>
<div class="a e" style="left:0.20px;top:396.57px;height:13.61px;line-height:13.61px;width:760.00px;">6","realName":"<span class="c">章振锐</span>","nickName":"<span class="c">①笑倆濄</span>","head":"<u>http://47.111.254.53/head/man/1141.png</u>","sex":"man","sign"</div>
<div class="a e" style="left:0.20px;top:410.18px;height:13.61px;line-height:13.61px;width:760.00px;">,"realName":"<span class="c">米谷山</span>","nickName":"<span class="c">陆励成最帅！！</span>","head":"<u>http://47.111.254.53/head/woman/1001069.png</u>","sex":"wo</div>
<div class="a e" style="left:0.20px;top:423.79px;height:13.61px;line-height:13.61px;width:760.00px;">alName":"<span class="c">翟兴</span>","nickName":"<span class="c">青春如此放荡</span>","head":"<u>http://47.111.254.53/head/man/1186.png</u>","sex":"man","sign":"<span class="c">浪</span></div>
<div class="a e" style="left:0.20px;top:437.39px;height:13.61px;line-height:13.61px;width:760.00px;">realName":"<span class="c">寇春梅</span>","nickName":"<span class="c">网络毁我青春梦</span>@","head":"<u>http://47.111.254.53/head/woman/1002172.png</u>","sex":"wom</div>
<div class="a e" style="left:0.20px;top:451.00px;height:13.61px;line-height:13.61px;width:760.00px;">7464","realName":"<span class="c">通浩广</span>","nickName":"<span class="c">有一种恶习叫做不知足</span>","head":"<u>http://47.111.254.53/head/man/1867.png</u>","se</div>
<div class="a e" style="left:0.20px;top:464.60px;height:13.61px;line-height:13.61px;width:760.00px;">,"realName":"<span class="c">蒋瑶</span>","nickName":"<span class="c">掩饰我的无奈</span>","head":"<u>http://47.111.254.53/head/woman/1002578.png</u>","sex":"woman"</div>
<div class="a e" style="left:0.20px;top:83.64px;height:13.61px;line-height:13.61px;width:760.00px;">","realName":"<span class="c">常曦哲</span>","nic</div>
<div class="a e" style="left:0.20px;top:97.24px;height:13.61px;line-height:13.61px;width:760.00px;">08","realName":"<span class="c">卞碧灵</span>","realNa</div>
<div class="a e" style="left:0.20px;top:110.85px;height:13.61px;line-height:13.61px;width:760.00px;">5","realName":"<span class="c">屠德曜</span>","nickNam</div>
<div class="a e" style="left:0.20px;top:124.45px;height:13.61px;line-height:13.61px;width:760.00px;">realName":"<span class="c">邢冰烟</span>","nickName":"</div>
<div class="a e" style="left:0.20px;top:138.06px;height:13.61px;line-height:13.61px;width:760.00px;">alName":"<span class="c">宦可爱女孩名字大全</span>","n</div>
<div class="a e" style="left:0.20px;top:151.67px;height:13.61px;line-height:13.61px;width:760.00px;">11","realName":"<span class="c">舒昊天</span>","realNa</div>
<div class="a e" style="left:-6.60px;top:165.27px;height:13.61px;line-height:13.61px;width:760.00px;"><span class="c">崔冰夏</span>","nickName":"<span class="c">ぺ琉璃、碎</span>",</div>
<div class="a e" style="left:0.20px;top:178.88px;height:13.61px;line-height:13.61px;width:760.00px;">110.25924","realName":"<span class="c">杨烁</span>","n</div>
<div class="a e" style="left:0.20px;top:192.48px;height:13.61px;line-height:13.61px;width:760.00px;">70","realName":"<span class="c">费星然</span>","realNa</div>
<div class="a e" style="left:0.20px;top:206.09px;height:13.61px;line-height:13.61px;width:760.00px;">0","realName":"<span class="c">东寻真</span>","nickNam</div>
<div class="a e" style="left:0.20px;top:219.70px;height:13.61px;line-height:13.61px;width:760.00px;">alName":"<span class="c">蓟雪枫</span>","nickName":"<span class="c">梦</span></div>
<div class="a e" style="left:0.20px;top:233.30px;height:13.61px;line-height:13.61px;width:760.00px;"><span class="c">全知非</span>","nickName":"<span class="c">我有药你有</span></div>
<div class="a e" style="left:0.20px;top:246.91px;height:13.61px;line-height:13.61px;width:760.00px;">,"realName":"<span class="c">郁晓绿</span>","nickName"</div>
<div class="a e" style="left:0.20px;top:260.51px;height:13.61px;line-height:13.61px;width:760.00px;">","realName":"<span class="c">施阳</span>","nickName":</div>
<div class="a e" style="left:0.20px;top:274.12px;height:13.61px;line-height:13.61px;width:760.00px;">","realName":"<span class="c">季若芹</span>","nickName</div>
<div class="a e" style="left:0.20px;top:287.73px;height:13.61px;line-height:13.61px;width:760.00px;">lName":"<span class="c">镡景彰</span>","nickName":"<span class="c">旧</span></div>
<div class="a e" style="left:0.20px;top:301.33px;height:13.61px;line-height:13.61px;width:760.00px;">"realName":"<span class="c">贺幼薇</span>","nickName":</div>
<div class="a e" style="left:-6.60px;top:314.94px;height:13.61px;line-height:13.61px;width:760.00px;"><span class="c">叩轩昂</span>","nickName":"<span class="c">唱歌跑调了</span></div>
<div class="a e" style="left:0.20px;top:328.54px;height:13.61px;line-height:13.61px;width:760.00px;">"realName":"<span class="c">扈以蕊</span>","nickName":</div>
<div class="a e" style="left:0.20px;top:342.15px;height:13.61px;line-height:13.61px;width:760.00px;">"realName":"<span class="c">窦秋柔</span>","nickName":</div>
<div class="a e" style="left:0.20px;top:355.76px;height:13.61px;line-height:13.61px;width:760.00px;">lName":"<span class="c">公醉蓝</span>","nickName":"<span class="c">旧</span></div>
<div class="a e" style="left:0.20px;top:369.36px;height:13.61px;line-height:13.61px;width:760.00px;">7","realName":"<span class="c">堵智刚</span>","nickNam</div>
<div class="a e" style="left:667.10px;top:83.64px;height:13.61px;line-height:13.61px;width:90.00px;">an","sign":"<span class="c">一</span></div>
<div class="a e" style="left:667.10px;top:97.24px;height:13.61px;line-height:13.61px;width:90.00px;"><u>g</u>","sex":"wom</div>
<div class="a e" style="left:667.10px;top:110.85px;height:13.61px;line-height:13.61px;width:90.00px;">sex":"man","s</div>
<div class="a e" style="left:667.10px;top:124.45px;height:13.61px;line-height:13.61px;width:90.00px;">"sex":"woman"</div>
<div class="a e" style="left:667.10px;top:138.06px;height:13.61px;line-height:13.61px;width:90.00px;"><u>oman/10014305</u></div>
<div class="a e" style="left:667.10px;top:151.67px;height:13.61px;line-height:13.61px;width:90.00px;">"sex":"man","s</div>
<div class="a e" style="left:667.10px;top:165.27px;height:13.61px;line-height:13.61px;width:90.00px;">man","sign"</div>
<div class="a e" style="left:667.10px;top:178.88px;height:13.61px;line-height:13.61px;width:90.00px;"><u>g</u>","sex":"man</div>
<div class="a e" style="left:667.10px;top:192.48px;height:13.61px;line-height:13.61px;width:90.00px;"><u>199.png</u>","sex</div>
<div class="a e" style="left:667.10px;top:206.09px;height:13.61px;line-height:13.61px;width:90.00px;">,"sex":"woman</div>
<div class="a e" style="left:667.10px;top:219.70px;height:13.61px;line-height:13.61px;width:90.00px;">","sex":"woma</div>
<div class="a e" style="left:667.10px;top:233.30px;height:13.61px;line-height:13.61px;width:90.00px;"><span class="c">眼泪忘了么，你</span></div>
<div class="a e" style="left:667.10px;top:246.91px;height:13.61px;line-height:13.61px;width:90.00px;"><u>85.png</u>","sex"</div>
<div class="a e" style="left:667.10px;top:260.51px;height:13.61px;line-height:13.61px;width:90.00px;">an","sign":"<span class="c">一</span></div>
<div class="a e" style="left:667.10px;top:274.12px;height:13.61px;line-height:13.61px;width:90.00px;">","sex":"woma</div>
<div class="a e" style="left:667.10px;top:287.73px;height:13.61px;line-height:13.61px;width:90.00px;">n":"<span class="c">搀扶着慢慢</span></div>
<div class="a e" style="left:667.10px;top:301.33px;height:13.61px;line-height:13.61px;width:90.00px;">x":"woman","s</div>
<div class="a e" style="left:667.10px;top:314.94px;height:13.61px;line-height:13.61px;width:90.00px;">gn":"<span class="c">在你眼中我</span></div>
<div class="a e" style="left:667.10px;top:328.54px;height:13.61px;line-height:13.61px;width:90.00px;">sex":"woman",</div>
<div class="a e" style="left:667.10px;top:342.15px;height:13.61px;line-height:13.61px;width:90.00px;">","sex":"woma</div>
<div class="a e" style="left:667.10px;top:355.76px;height:13.61px;line-height:13.61px;width:90.00px;">sex":"woman",</div>
<div class="a e" style="left:667.10px;top:369.36px;height:13.61px;line-height:13.61px;width:90.00px;">man","sign"</div>
<div class="a e" style="left:177.00px;top:84.24px;height:13.61px;line-height:13.61px;color:#8a8a8a">kName":"<span class="c">略差怎</span>","head":"<u>http://47.111.254.53/head/man/1325.png</u>","sex":"m</div>
</div>
<div class="a ln" style="left:414.5px;width:24.2px;top:169.80px;height:13.61px;line-height:13.61px">1</div>
<div class="a ln" style="left:414.5px;width:24.2px;top:183.41px;height:13.61px;line-height:13.61px">2</div>
<div class="a ln" style="left:414.5px;width:24.2px;top:197.01px;height:13.61px;line-height:13.61px">3</div>
<div class="a ln" style="left:414.5px;width:24.2px;top:210.62px;height:13.61px;line-height:13.61px">4</div>
<div class="a ln" style="left:414.5px;width:24.2px;top:224.22px;height:13.61px;line-height:13.61px">5</div>
<div class="a ln" style="left:414.5px;width:24.2px;top:237.83px;height:13.61px;line-height:13.61px">6</div>
<div class="a ln" style="left:414.5px;width:24.2px;top:251.44px;height:13.61px;line-height:13.61px">7</div>
<div class="a ln" style="left:414.5px;width:24.2px;top:265.04px;height:13.61px;line-height:13.61px">8</div>
<div class="a ln" style="left:414.5px;width:24.2px;top:278.65px;height:13.61px;line-height:13.61px">9</div>
<div class="a ln" style="left:414.5px;width:24.2px;top:292.25px;height:13.61px;line-height:13.61px">10</div>
<div class="a ln" style="left:414.5px;width:24.2px;top:305.86px;height:13.61px;line-height:13.61px">11</div>
<div class="a ln" style="left:414.5px;width:24.2px;top:319.47px;height:13.61px;line-height:13.61px">12</div>
<div class="a ln" style="left:414.5px;width:24.2px;top:333.07px;height:13.61px;line-height:13.61px">13</div>
<div class="a ln" style="left:414.5px;width:24.2px;top:346.68px;height:13.61px;line-height:13.61px">14</div>
<div class="a ln" style="left:414.5px;width:24.2px;top:360.28px;height:13.61px;line-height:13.61px">15</div>
<div class="a ln" style="left:414.5px;width:24.2px;top:373.89px;height:13.61px;line-height:13.61px">16</div>
<div class="a ln" style="left:414.5px;width:24.2px;top:387.50px;height:13.61px;line-height:13.61px">17</div>
<div class="a ln" style="left:414.5px;width:24.2px;top:401.10px;height:13.61px;line-height:13.61px">18</div>
<div class="a ln" style="left:414.5px;width:24.2px;top:414.71px;height:13.61px;line-height:13.61px">19</div>
<div class="a ln" style="left:414.5px;width:24.2px;top:428.31px;height:13.61px;line-height:13.61px">20</div>
<div class="a ln" style="left:414.5px;width:24.2px;top:441.92px;height:13.61px;line-height:13.61px">21</div>
<div class="a ln" style="left:414.5px;width:24.2px;top:455.53px;height:13.61px;line-height:13.61px">22</div>
<div class="a ln" style="left:414.5px;width:24.2px;top:469.13px;height:13.61px;line-height:13.61px">23</div>
<div class="a ln" style="left:414.5px;width:24.2px;top:482.74px;height:13.61px;line-height:13.61px">24</div>
<div class="a ln" style="left:414.5px;width:24.2px;top:496.34px;height:13.61px;line-height:13.61px">25</div>
<div class="a ln" style="left:414.5px;width:24.2px;top:509.95px;height:13.61px;line-height:13.61px">26</div>
<div class="a ln" style="left:414.5px;width:24.2px;top:523.56px;height:13.61px;line-height:13.61px">27</div>
<div class="a ln" style="left:414.5px;width:24.2px;top:537.16px;height:13.61px;line-height:13.61px">28</div>
<div class="a ln" style="left:414.5px;width:24.2px;top:550.77px;height:13.61px;line-height:13.61px">29</div>
<div class="a ln" style="left:414.5px;width:24.2px;top:564.37px;height:13.61px;line-height:13.61px">30</div>
<div class="a ln" style="left:414.5px;width:24.2px;top:577.98px;height:13.61px;line-height:13.61px">31</div>
<div class="a ln" style="left:414.5px;width:24.2px;top:591.59px;height:13.61px;line-height:13.61px">32</div>
<div class="a ln" style="left:414.5px;width:24.2px;top:605.19px;height:13.61px;line-height:13.61px">33</div>
<div class="a ln" style="left:414.5px;width:24.2px;top:618.80px;height:13.61px;line-height:13.61px">34</div>
<div class="a ln" style="left:414.5px;width:24.2px;top:632.40px;height:13.61px;line-height:13.61px">35</div>
<div class="a " style="left:414.50px;top:645.40px;width:800.00px;height:13.70px;background:#eceae5"></div>
<div class="a " style="left:414.80px;top:645.40px;width:14.00px;height:13.70px;background:#d4d0c8;box-shadow:inset -1px -1px 0 #404040,inset 1px 1px 0 #fff,inset -2px -2px 0 #808080;"></div>
<svg class="a" style="left:419.4px;top:649.2px" width="4" height="6.4" viewBox="0 0 4 6.4"><path d="M3.8 0 L.2 3.2 L3.8 6.4Z" fill="#000"/></svg>
<div class="a " style="left:703.80px;top:645.40px;width:358.70px;height:13.70px;background:#d4d0c8;box-shadow:inset -1px -1px 0 #404040,inset 1px 1px 0 #fff,inset -2px -2px 0 #808080;"></div>
<div class="a " style="left:412.50px;top:659.10px;width:800.00px;height:2.60px;background:#d4d0c8;box-shadow:inset 0 1px 0 #fff"></div>
<div class="a " style="left:411.50px;top:664.60px;width:298.10px;height:15.00px;box-shadow:inset 1px 1px 0 #808080,inset -1px -1px 0 #fff"></div>
<div class="a t u" style="left:413.30px;top:666.8px;height:14px;line-height:14px;white-space:pre"><span class="l">Normal text file</span></div>
<div class="a " style="left:712.50px;top:664.60px;width:167.80px;height:15.00px;box-shadow:inset 1px 1px 0 #808080,inset -1px -1px 0 #fff"></div>
<div class="a t u" style="left:714.30px;top:666.8px;height:14px;line-height:14px;white-space:pre"><span class="l">length : 1,903,403    lines : 6,(</span></div>
<div class="a " style="left:883.30px;top:664.60px;width:217.70px;height:15.00px;box-shadow:inset 1px 1px 0 #808080,inset -1px -1px 0 #fff"></div>
<div class="a t u" style="left:885.10px;top:666.8px;height:14px;line-height:14px;white-space:pre"><span class="l">Ln : 12    Col : 197    Sel : 0 | 0</span></div>
<div class="a " style="left:1104.20px;top:664.60px;width:91.80px;height:15.00px;box-shadow:inset 1px 1px 0 #808080,inset -1px -1px 0 #fff"></div>
<div class="a t u" style="left:1106.00px;top:666.8px;height:14px;line-height:14px;white-space:pre"><span class="l">Windows (CR LF)</span></div>
<div class="a " style="left:1198.00px;top:664.60px;width:32.00px;height:15.00px;box-shadow:inset 1px 1px 0 #808080,inset -1px -1px 0 #fff"></div>
<div class="a " style="left:630.60px;top:254.80px;width:492.30px;height:294.70px;background:#d4d0c8;box-shadow:inset 1px 1px 0 #d4d0c8,inset -1px -1px 0 #404040,inset 2px 2px 0 #fff,inset -2px -2px 0 #808080"></div>
<div class="a " style="left:632.80px;top:257.00px;width:487.60px;height:12.30px;background:#0a246a"></div>
<div class="a t tb" style="left:634.50px;top:257.80px;height:14px;line-height:14px;color:#fff">替换</div>
<div class="a " style="left:1110.30px;top:259.00px;width:8.60px;height:8.40px;background:#d4d0c8;box-shadow:inset -1px -1px 0 #404040,inset 1px 1px 0 #fff,inset -2px -2px 0 #808080;"></div>
<svg class="a" style="left:1110.3px;top:259px" width="8.6" height="8.4" viewBox="0 0 9 9"><path d="M2.4 2.4 L6.2 6.2 M6.2 2.4 L2.4 6.2" stroke="#000" stroke-width="1.2"/></svg>
<div class="a " style="left:632.60px;top:288.00px;width:488.40px;height:243.00px;background:#d4d0c8;box-shadow:inset 1px 1px 0 #fff,inset -1px 0 0 #404040,inset -2px 0 0 #808080"></div>
<div class="a " style="left:635.80px;top:273.00px;width:34.00px;height:15.20px;background:#d4d0c8;box-shadow:inset 1px 1px 0 #fff,inset -1px 0 0 #808080"></div>
<div class="a t d" style="left:639.20px;top:275.00px;height:14px;line-height:14px;">查找</div>
<div class="a " style="left:710.00px;top:273.00px;width:46.80px;height:15.20px;background:#d4d0c8;box-shadow:inset 0 1px 0 #fff,inset -1px 0 0 #404040"></div>
<div class="a t d" style="left:710.80px;top:275.00px;height:14px;line-height:14px;">文件查找</div>
<div class="a " style="left:757.00px;top:273.00px;width:35.50px;height:15.20px;background:#d4d0c8;box-shadow:inset 0 1px 0 #fff,inset -1px 0 0 #404040"></div>
<div class="a t d" style="left:761.70px;top:275.00px;height:14px;line-height:14px;">标记</div>
<div class="a " style="left:669.60px;top:270.80px;width:37.60px;height:18.60px;background:#d4d0c8;box-shadow:inset 1px 1px 0 #fff,inset -1px 0 0 #404040,inset -2px 0 0 #808080"></div>
<div class="a t d" style="left:675.80px;top:273.40px;height:14px;line-height:14px;">替换</div>
<div class="a t d" style="left:690.00px;top:301.70px;height:14px;line-height:14px;">查找目标<span class="dn"> :</span></div>
<div class="a t d" style="left:688.30px;top:326.40px;height:14px;line-height:14px;">替换为<span class="dn">(P) :</span></div>
<div class="a " style="left:739.20px;top:298.30px;width:226.00px;height:17.00px;background:#fff;box-shadow:inset 1px 1px 0 #808080,inset -1px -1px 0 #fff,inset 2px 2px 0 #404040,inset -2px -2px 0 #d4d0c8;"></div>
<div class="a " style="left:951.40px;top:300.00px;width:12.00px;height:13.60px;background:#d4d0c8;box-shadow:inset -1px -1px 0 #404040,inset 1px 1px 0 #fff,inset -2px -2px 0 #808080;"></div>
<svg class="a" style="left:954.4px;top:305.3px" width="6" height="3.4" viewBox="0 0 6 3.4"><path d="M0 0 L6 0 L3 3.4Z" fill="#000"/></svg>
<div class="a " style="left:742.30px;top:300.80px;width:62.40px;height:11.80px;background:#0a246a"></div>
<div class="a t d" style="left:743.00px;top:301.00px;height:14px;line-height:14px;color:#fff;font-size:9.45px"><span class="dn">47.111.254.53</span></div>
<div class="a " style="left:739.20px;top:323.30px;width:226.00px;height:17.00px;background:#fff;box-shadow:inset 1px 1px 0 #808080,inset -1px -1px 0 #fff,inset 2px 2px 0 #404040,inset -2px -2px 0 #d4d0c8;"></div>
<div class="a " style="left:951.40px;top:325.00px;width:12.00px;height:13.60px;background:#d4d0c8;box-shadow:inset -1px -1px 0 #404040,inset 1px 1px 0 #fff,inset -2px -2px 0 #808080;"></div>
<svg class="a" style="left:954.4px;top:330.3px" width="6" height="3.4" viewBox="0 0 6 3.4"><path d="M0 0 L6 0 L3 3.4Z" fill="#000"/></svg>
<div class="a t d" style="left:743.00px;top:326.00px;height:14px;line-height:14px;color:#333;font-size:9.45px"><span class="dn">10.</span></div>
<div class="a t d" style="left:792.60px;top:326.00px;height:14px;line-height:14px;color:#333;font-size:9.45px"><span class="dn">.226</span></div>
<svg class="a" style="left:736px;top:314px" width="110" height="36" viewBox="736 314 110 36"><defs><filter id="bl" x="-10%" y="-30%" width="120%" height="160%"><feGaussianBlur stdDeviation="0.9"/></filter></defs><g filter="url(#bl)"><path d="M742.5 326.6 Q755 323.6 768 326.4 L769.5 331 Q756 334.4 743.5 331.6Z" fill="#dadada"/><path d="M763 333.5 L780.5 320 L786 320.6 L788.5 327 L773 337Z" fill="#d3d3d3"/><path d="M757 333 L790 329.6 L815 333.4 L835 336.4 L837.5 342 L800 344.4 L770 340.6Z" fill="#e7e7e7"/><path d="M800 333 L834 337 L836 341.6 L803 343.4Z" fill="#f0f0f0"/></g></svg>
<div class="a " style="left:975.00px;top:298.30px;width:116.70px;height:19.20px;background:#000"></div>
<div class="a " style="left:976.00px;top:299.30px;width:114.70px;height:17.20px;background:#d4d0c8;box-shadow:inset -1px -1px 0 #404040,inset 1px 1px 0 #fff,inset -2px -2px 0 #808080;"></div>
<div class="a t d" style="left:975.00px;top:299.10px;width:116.70px;height:19.20px;line-height:19.20px;text-align:center">查找下一个</div>
<div class="a " style="left:975.00px;top:323.30px;width:116.70px;height:18.40px;background:#d4d0c8;box-shadow:inset -1px -1px 0 #404040,inset 1px 1px 0 #fff,inset -2px -2px 0 #808080;"></div>
<div class="a t d" style="left:975.00px;top:324.10px;width:116.70px;height:18.40px;line-height:18.40px;text-align:center">替换<span class="dn">(R)</span></div>
<div class="a " style="left:878.50px;top:344.00px;width:215.00px;height:25.40px;border:1px solid #8c8a84;box-shadow:1px 1px 0 #f4f3f0,inset 1px 1px 0 #f4f3f0;box-sizing:border-box;"></div>
<div class="a " style="left:975.30px;top:347.40px;width:115.80px;height:19.10px;background:#d4d0c8;box-shadow:inset -1px -1px 0 #404040,inset 1px 1px 0 #fff,inset -2px -2px 0 #808080;"></div>
<div class="a t d" style="left:975.30px;top:348.20px;width:115.80px;height:19.10px;line-height:19.10px;text-align:center">全部替换<span class="dn">(A)</span></div>
<div class="a " style="left:975.30px;top:373.30px;width:115.80px;height:27.00px;background:#d4d0c8;box-shadow:inset -1px -1px 0 #404040,inset 1px 1px 0 #fff,inset -2px -2px 0 #808080;"></div>
<div class="a t d" style="left:975.30px;top:374.10px;width:115.80px;height:27.00px;line-height:27.00px;text-align:center">替换所有打开文件</div>
<div class="a " style="left:975.30px;top:405.90px;width:115.80px;height:18.00px;background:#d4d0c8;box-shadow:inset -1px -1px 0 #404040,inset 1px 1px 0 #fff,inset -2px -2px 0 #808080;"></div>
<div class="a t d" style="left:975.30px;top:406.70px;width:115.80px;height:18.00px;line-height:18.00px;text-align:center">取消</div>
<div class="a " style="left:1097.50px;top:303.00px;width:9.80px;height:9.80px;background:#fff;box-shadow:inset 1px 1px 0 #808080,inset -1px -1px 0 #fff,inset 2px 2px 0 #404040,inset -2px -2px 0 #d4d0c8;"></div>
<div class="a " style="left:888.60px;top:352.00px;width:9.80px;height:9.80px;background:#d4d0c8;box-shadow:inset 1px 1px 0 #808080,inset -1px -1px 0 #fff,inset 2px 2px 0 #404040,inset -2px -2px 0 #d4d0c8;"></div>
<div class="a t d" style="left:903.30px;top:351.20px;height:14px;line-height:14px;color:#808080;text-shadow:.8px .8px 0 #fff">选取范围内</div>
<div class="a " style="left:648.40px;top:381.30px;width:9.80px;height:9.80px;background:#fff;box-shadow:inset 1px 1px 0 #808080,inset -1px -1px 0 #fff,inset 2px 2px 0 #404040,inset -2px -2px 0 #d4d0c8;"></div>
<div class="a t d" style="left:663.50px;top:380.70px;height:14px;line-height:14px;">反向查找</div>
<div class="a " style="left:648.40px;top:397.30px;width:9.80px;height:9.80px;background:#fff;box-shadow:inset 1px 1px 0 #808080,inset -1px -1px 0 #fff,inset 2px 2px 0 #404040,inset -2px -2px 0 #d4d0c8;"></div>
<div class="a t d" style="left:663.50px;top:396.80px;height:14px;line-height:14px;">全词匹配<span class="dn">(W)</span></div>
<div class="a " style="left:648.40px;top:413.60px;width:9.80px;height:9.80px;background:#fff;box-shadow:inset 1px 1px 0 #808080,inset -1px -1px 0 #fff,inset 2px 2px 0 #404040,inset -2px -2px 0 #d4d0c8;"></div>
<div class="a t d" style="left:663.50px;top:413.60px;height:14px;line-height:14px;">匹配大小写<span class="dn">(C)</span></div>
<div class="a " style="left:648.40px;top:430.00px;width:9.80px;height:9.80px;background:#fff;box-shadow:inset 1px 1px 0 #808080,inset -1px -1px 0 #fff,inset 2px 2px 0 #404040,inset -2px -2px 0 #d4d0c8;"></div>
<svg class="a" style="left:648.4px;top:430.0px" width="9.8" height="9.8" viewBox="0 0 10 10"><path d="M2 4.4 L4.1 6.5 L8.2 2.4 L8.2 4.8 L4.1 8.9 L2 6.8Z" fill="#000"/></svg>
<div class="a t d" style="left:663.50px;top:430.00px;height:14px;line-height:14px;">循环查找<span class="dn">(D)</span></div>
<div class="a " style="left:640.80px;top:458.20px;width:202.00px;height:58.00px;border:1px solid #8c8a84;box-shadow:1px 1px 0 #f4f3f0,inset 1px 1px 0 #f4f3f0;box-sizing:border-box;"></div>
<div class="a " style="left:645.80px;top:452.00px;width:45.00px;height:13.00px;background:#d4d0c8"></div>
<div class="a t d" style="left:647.80px;top:452.80px;height:14px;line-height:14px;">查找模式</div>
<svg class="a" style="left:647.9px;top:467.8px" width="11" height="11" viewBox="0 0 11 11"><circle cx="5.5" cy="5.5" r="4.7" fill="#fff" stroke="#808080" stroke-width="1"/><path d="M2.2 8.8 A4.7 4.7 0 0 0 8.8 2.2" fill="none" stroke="#f4f2ee" stroke-width="1"/><path d="M2.6 8.2 A3.9 3.9 0 0 1 8.2 2.6" fill="none" stroke="#404040" stroke-width=".9"/><circle cx="5.5" cy="5.5" r="1.7" fill="#000"/></svg>
<div class="a t d" style="left:663.50px;top:469.20px;height:14px;line-height:14px;">普通</div>
<svg class="a" style="left:647.9px;top:485.5px" width="11" height="11" viewBox="0 0 11 11"><circle cx="5.5" cy="5.5" r="4.7" fill="#fff" stroke="#808080" stroke-width="1"/><path d="M2.2 8.8 A4.7 4.7 0 0 0 8.8 2.2" fill="none" stroke="#f4f2ee" stroke-width="1"/><path d="M2.6 8.2 A3.9 3.9 0 0 1 8.2 2.6" fill="none" stroke="#404040" stroke-width=".9"/></svg>
<div class="a t d" style="left:663.50px;top:486.20px;height:14px;line-height:14px;">扩展<span class="dn"> (\n, \r, \t, \0, \x...)</span></div>
<svg class="a" style="left:647.9px;top:501.2px" width="11" height="11" viewBox="0 0 11 11"><circle cx="5.5" cy="5.5" r="4.7" fill="#fff" stroke="#808080" stroke-width="1"/><path d="M2.2 8.8 A4.7 4.7 0 0 0 8.8 2.2" fill="none" stroke="#f4f2ee" stroke-width="1"/><path d="M2.6 8.2 A3.9 3.9 0 0 1 8.2 2.6" fill="none" stroke="#404040" stroke-width=".9"/></svg>
<div class="a t d" style="left:663.50px;top:502.20px;height:14px;line-height:14px;">正则表达式<span class="dn">(E)</span></div>
<div class="a " style="left:752.20px;top:502.50px;width:9.80px;height:9.80px;background:#d4d0c8;box-shadow:inset 1px 1px 0 #808080,inset -1px -1px 0 #fff,inset 2px 2px 0 #404040,inset -2px -2px 0 #d4d0c8;"></div>
<div class="a t d" style="left:766.80px;top:502.20px;height:14px;line-height:14px;color:#808080;text-shadow:.8px .8px 0 #fff"><span class="dn">. </span>匹配新行</div>
<div class="a " style="left:962.60px;top:457.40px;width:125.60px;height:59.20px;border:1px solid #8c8a84;box-shadow:1px 1px 0 #f4f3f0,inset 1px 1px 0 #f4f3f0;box-sizing:border-box;"></div>
<div class="a " style="left:955.00px;top:451.50px;width:104.50px;height:13.50px;background:#d4d0c8"></div>
<div class="a " style="left:957.30px;top:453.20px;width:9.80px;height:9.80px;background:#fff;box-shadow:inset 1px 1px 0 #808080,inset -1px -1px 0 #fff,inset 2px 2px 0 #404040,inset -2px -2px 0 #d4d0c8;"></div>
<svg class="a" style="left:957.3px;top:453.2px" width="9.8" height="9.8" viewBox="0 0 10 10"><path d="M2 4.4 L4.1 6.5 L8.2 2.4 L8.2 4.8 L4.1 8.9 L2 6.8Z" fill="#000"/></svg>
<div class="a t d" style="left:971.90px;top:452.60px;height:14px;line-height:14px;">透明度</div>
<svg class="a" style="left:975.5px;top:467.8px" width="11" height="11" viewBox="0 0 11 11"><circle cx="5.5" cy="5.5" r="4.7" fill="#fff" stroke="#808080" stroke-width="1"/><path d="M2.2 8.8 A4.7 4.7 0 0 0 8.8 2.2" fill="none" stroke="#f4f2ee" stroke-width="1"/><path d="M2.6 8.2 A3.9 3.9 0 0 1 8.2 2.6" fill="none" stroke="#404040" stroke-width=".9"/><circle cx="5.5" cy="5.5" r="1.7" fill="#000"/></svg>
<div class="a t d" style="left:990.10px;top:469.20px;height:14px;line-height:14px;">失去焦点后</div>
<svg class="a" style="left:975.5px;top:485.3px" width="11" height="11" viewBox="0 0 11 11"><circle cx="5.5" cy="5.5" r="4.7" fill="#fff" stroke="#808080" stroke-width="1"/><path d="M2.2 8.8 A4.7 4.7 0 0 0 8.8 2.2" fill="none" stroke="#f4f2ee" stroke-width="1"/><path d="M2.6 8.2 A3.9 3.9 0 0 1 8.2 2.6" fill="none" stroke="#404040" stroke-width=".9"/></svg>
<div class="a t d" style="left:990.10px;top:486.00px;height:14px;line-height:14px;">始终</div>
<div class="a " style="left:976.10px;top:504.80px;width:99.00px;height:1.80px;background:#808080;box-shadow:0 1px 0 #fff"></div>
<div class="a " style="left:1046.60px;top:501.00px;width:3.60px;height:8.20px;background:#d4d0c8;box-shadow:inset 1px 1px 0 #fff,inset -1px 0 0 #404040"></div>
<div class="a " style="left:1046.60px;top:509.00px;width:3.60px;height:1.40px;background:#404040"></div>
<div class="a " style="left:633.00px;top:531.40px;width:487.60px;height:15.40px;background:#d4d0c8;box-shadow:inset 1px 1px 0 #808080,inset -1px -1px 0 #fff"></div>
<svg class="a" style="left:1108.5px;top:536px" width="11" height="11" viewBox="0 0 11 11"><path d="M10.5 1.5 L1.5 10.5 M10.5 4.5 L4.5 10.5 M10.5 7.5 L7.5 10.5" stroke="#808080" stroke-width="1.1"/><path d="M10.5 .6 L.6 10.5 M10.5 3.6 L3.6 10.5 M10.5 6.6 L6.6 10.5" stroke="#fff" stroke-width=".7"/></svg>
<svg class="a" style="left:355px;top:536px" width="52" height="28" viewBox="355 536 52 28"><path d="M357.9 541.5 L372.5 539.8 L371.7 543.5 L401.2 559 L369.1 549.1 L367.4 552Z" fill="#f22a2c"/></svg>
<svg class="a" style="left:1088px;top:354px" width="44" height="24" viewBox="1088 354 44 24"><path d="M1091 362.4 L1105.6 359.7 L1105 363 L1126.7 372.9 L1103.4 369.2 L1101.1 371.7Z" fill="#f22a2c"/></svg>
</div></div></body></html>
